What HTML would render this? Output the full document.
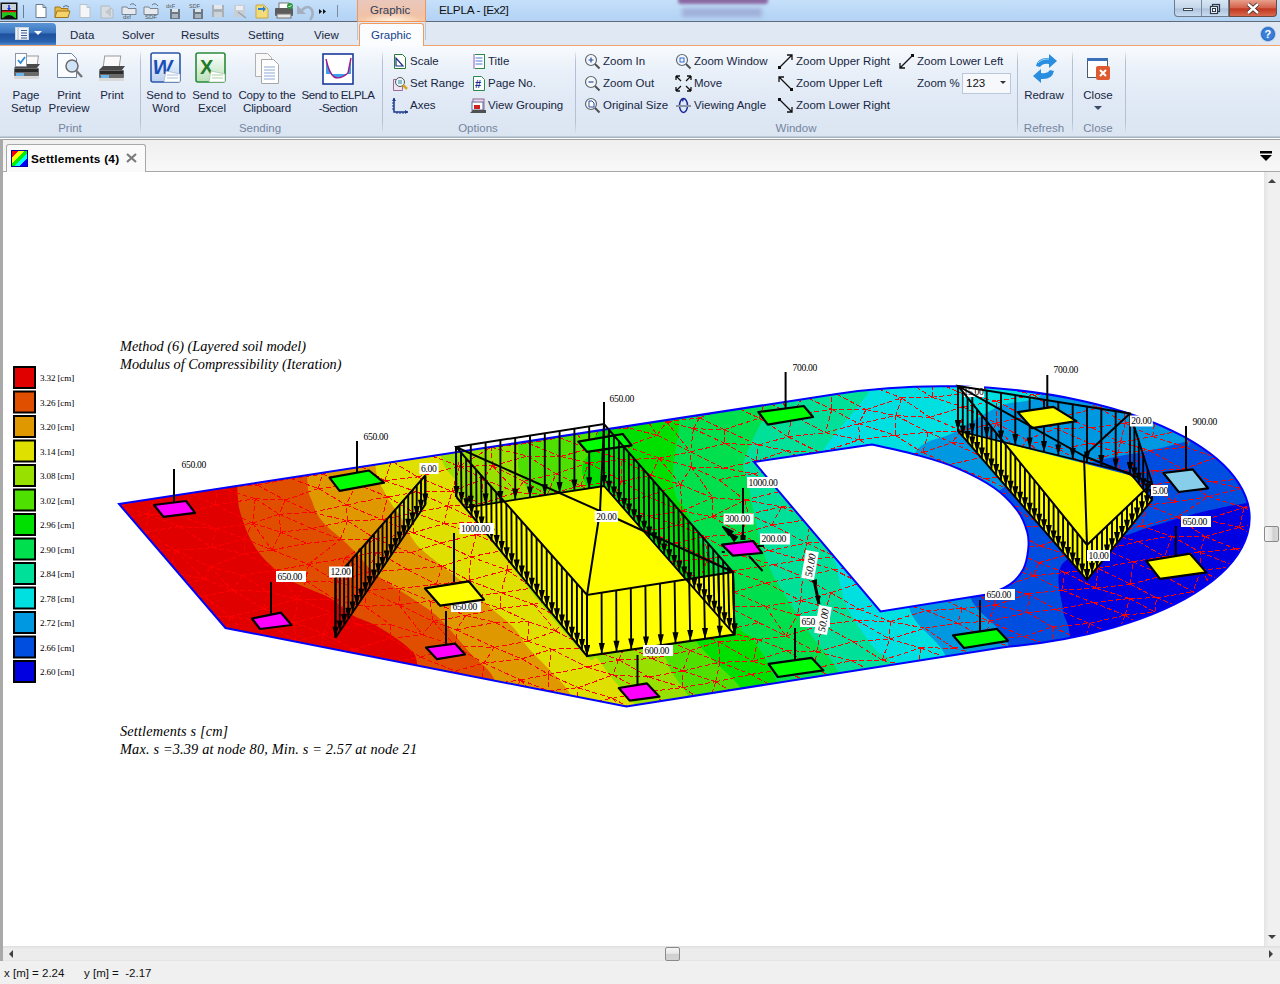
<!DOCTYPE html>
<html><head><meta charset="utf-8">
<style>
*{margin:0;padding:0;box-sizing:border-box}
html,body{width:1280px;height:984px;overflow:hidden;background:#fff;font-family:"Liberation Sans",sans-serif;font-size:11.5px;color:#172642}
.a{position:absolute}
.t{white-space:nowrap;line-height:14px}
.gl{color:#7485a0;text-align:center;white-space:nowrap;font-size:11.5px;line-height:14px}
.bt{text-align:center;white-space:nowrap;line-height:13px;color:#172642;font-size:11.5px}
svg{overflow:visible}
</style></head><body>
<svg class="a" style="left:0;top:0" width="1280" height="984" viewBox="0 0 1280 984">
<defs><clipPath id="pl"><path clip-rule="evenodd" d="M119 504L836.6 394A308.6 131.9 0 1 1 1002.2 647.4L626.5 706.5L225.5 628Z M754 462L871.9 444.5C879.4 446.2 903.0 451.1 917.0 455.0C931.0 458.9 942.9 462.1 955.8 467.6C968.7 473.1 984.1 480.8 994.4 488.0C1004.7 495.2 1012.1 503.6 1017.6 511.0C1023.1 518.4 1025.5 525.8 1027.3 532.3C1029.1 538.8 1028.9 543.6 1028.2 549.7C1027.5 555.8 1026.4 563.2 1023.4 569.0C1020.4 574.8 1015.6 580.2 1010.0 584.4C1004.4 588.6 993.3 592.4 990.0 594.0L880.5 611.5Z"/></clipPath></defs>
<g clip-path="url(#pl)">
<rect x="100" y="350" width="1170" height="380" fill="#0000e0"/>
<path d="M1270.0 360.0C1270.0 383.8 1273.7 479.2 1270.0 503.0C1266.3 526.8 1259.4 501.4 1247.6 503.0C1235.8 504.6 1215.3 508.7 1199.0 512.7C1182.7 516.7 1161.5 523.5 1150.0 527.0C1138.5 530.5 1138.3 531.0 1130.0 534.0C1121.7 537.0 1111.5 539.7 1100.0 545.0C1088.5 550.3 1067.2 555.2 1061.0 566.0C1054.8 576.8 1061.5 598.2 1063.0 610.0C1064.5 621.8 1068.5 618.7 1070.0 637.0C1071.5 655.3 1071.7 706.2 1072.0 720.0 L-10 720 L-10 360 Z" fill="#004ee0"/>
<path d="M1200.0 360.0C1198.3 373.5 1192.7 427.3 1190.0 441.0C1187.3 454.7 1190.7 440.4 1184.0 442.0C1177.3 443.6 1164.0 447.5 1150.0 450.5C1136.0 453.5 1116.7 455.9 1100.0 460.0C1083.3 464.1 1066.7 470.0 1050.0 475.0C1033.3 480.0 1015.0 479.2 1000.0 490.0C985.0 500.8 964.8 521.8 960.0 540.0C955.2 558.2 963.0 581.7 971.0 599.0C979.0 616.3 1000.7 623.8 1008.0 644.0C1015.3 664.2 1013.8 707.3 1015.0 720.0 L-10 720 L-10 360 Z" fill="#0098e0"/>
<path d="M1060.0 360.0C1056.7 366.0 1050.0 388.3 1040.0 396.0C1030.0 403.7 1014.2 400.0 1000.0 406.0C985.8 412.0 969.2 424.2 955.0 432.0C940.8 439.8 924.2 438.3 915.0 453.0C905.8 467.7 901.0 494.2 900.0 520.0C899.0 545.8 901.3 585.2 909.0 608.0C916.7 630.8 939.2 638.3 946.0 657.0C952.8 675.7 949.3 709.5 950.0 720.0 L-10 720 L-10 360 Z" fill="#00e0e0"/>
<path d="M875.0 360.0C874.3 364.8 879.5 373.8 870.7 389.0C862.0 404.2 834.3 432.5 822.5 451.0C810.7 469.5 798.4 482.5 800.0 500.0C801.6 517.5 825.7 543.8 832.0 556.0C838.3 568.2 835.4 565.2 837.6 573.0C839.8 580.8 841.4 593.3 845.0 602.5C848.6 611.7 854.3 620.1 859.5 628.0C864.7 635.9 870.5 643.8 876.0 650.0C881.5 656.2 888.5 653.3 892.5 665.0C896.5 676.7 898.8 710.8 900.0 720.0 L-10 720 L-10 360 Z" fill="#00e098"/>
<path d="M785.0 360.0C783.8 366.8 782.0 390.5 778.0 401.0C774.0 411.5 766.7 412.8 761.0 423.0C755.3 433.2 746.2 451.8 744.0 462.0C741.8 472.2 744.5 468.2 748.0 484.0C751.5 499.8 758.0 537.2 765.0 557.0C772.0 576.8 781.8 589.3 790.0 603.0C798.2 616.7 806.0 627.5 814.0 639.0C822.0 650.5 832.8 658.5 838.0 672.0C843.2 685.5 843.8 712.0 845.0 720.0 L-10 720 L-10 360 Z" fill="#00e04e"/>
<path d="M682.0 360.0C681.6 370.0 681.2 401.5 679.7 420.0C678.2 438.5 673.5 457.8 673.0 471.0C672.5 484.2 674.5 491.7 677.0 499.0C679.5 506.3 678.3 494.8 688.0 515.0C697.7 535.2 724.1 599.2 735.0 620.0C745.9 640.8 746.4 629.7 753.4 640.0C760.4 650.3 772.2 668.7 777.0 682.0C781.8 695.3 781.2 713.7 782.0 720.0 L-10 720 L-10 360 Z" fill="#00e000"/>
<path d="M600.0 360.0C599.7 370.7 599.7 409.0 598.0 424.0C596.3 439.0 592.2 440.3 590.0 450.0C587.8 459.7 576.7 463.7 585.0 482.0C593.3 500.3 621.4 533.3 640.0 560.0C658.6 586.7 679.7 620.5 696.6 642.0C713.5 663.5 732.9 676.0 741.5 689.0C750.1 702.0 746.9 714.8 748.0 720.0 L-10 720 L-10 360 Z" fill="#4ee000"/>
<path d="M516.0 360.0C516.3 374.0 516.2 422.7 518.0 444.0C519.8 465.3 513.3 465.3 527.0 488.0C540.7 510.7 578.0 553.2 600.0 580.0C622.0 606.8 647.0 633.6 659.0 649.0C671.0 664.4 667.0 664.4 672.0 672.5C677.0 680.6 685.3 689.6 689.0 697.5C692.7 705.4 693.2 716.2 694.0 720.0 L-10 720 L-10 360 Z" fill="#98e000"/>
<path d="M436.0 360.0C436.7 375.3 436.7 431.8 440.0 452.0C443.3 472.2 452.3 473.4 456.0 481.0C459.7 488.6 449.7 479.3 462.0 497.5C474.3 515.7 509.5 563.8 530.0 590.0C550.5 616.2 573.8 643.6 585.0 655.0C596.2 666.4 592.4 654.4 597.0 658.4C601.6 662.4 606.0 670.8 612.5 678.8C619.0 686.7 631.1 699.1 636.0 706.0C640.9 712.9 641.0 717.7 642.0 720.0 L-10 720 L-10 360 Z" fill="#e0e000"/>
<path d="M372.0 360.0C372.5 377.0 372.8 439.8 375.0 462.0C377.2 484.2 380.5 483.5 385.0 493.0C389.5 502.5 397.8 512.0 402.0 519.0C406.2 526.0 407.0 530.2 410.0 535.0C413.0 539.8 414.7 542.8 420.0 548.0C425.3 553.2 435.3 560.7 442.0 566.0C448.7 571.3 452.7 573.7 460.0 580.0C467.3 586.3 477.2 596.2 486.0 604.0C494.8 611.8 506.0 619.8 513.0 627.0C520.0 634.2 521.5 639.9 528.0 647.5C534.5 655.1 545.0 664.8 552.0 672.5C559.0 680.2 566.2 686.1 570.0 694.0C573.8 701.9 574.2 715.7 575.0 720.0 L-10 720 L-10 360 Z" fill="#e09800"/>
<path d="M305.0 360.0C305.3 379.2 305.8 451.5 307.0 475.0C308.2 498.5 309.5 493.3 312.0 501.0C314.5 508.7 316.5 514.2 322.0 521.0C327.5 527.8 339.2 536.5 345.0 542.0C350.8 547.5 351.5 548.3 357.0 554.0C362.5 559.7 368.7 568.5 378.0 576.0C387.3 583.5 402.8 592.0 413.0 599.0C423.2 606.0 429.3 608.8 439.0 618.0C448.7 627.2 461.8 643.8 471.0 654.0C480.2 664.2 489.5 668.0 494.0 679.0C498.5 690.0 497.3 713.2 498.0 720.0 L-10 720 L-10 360 Z" fill="#e04e00"/>
<path d="M235.0 360.0C235.3 380.5 235.7 456.2 237.0 483.0C238.3 509.8 239.2 509.2 243.0 521.0C246.8 532.8 252.2 544.2 260.0 554.0C267.8 563.8 278.3 572.7 290.0 580.0C301.7 587.3 319.7 592.2 330.0 598.0C340.3 603.8 344.2 610.3 352.0 615.0C359.8 619.7 367.7 620.6 377.0 626.0C386.3 631.4 401.2 641.0 408.0 647.5C414.8 654.0 415.5 652.9 417.5 665.0C419.5 677.1 419.6 710.8 420.0 720.0 L-10 720 L-10 360 Z" fill="#e00000"/>
<path d="M130.0 516.8L148.7 514.1M141.3 529.9L145.3 531.8M143.2 532.2L145.3 531.8M145.4 534.7L145.3 531.8M158.7 550.2L175.2 550.3M187.0 583.1L204.7 579.2M196.7 594.5L204.0 596.2M199.4 597.6L204.0 596.2M216.0 617.0L230.1 616.7M119.1 504.0L119.1 504.1M122.1 507.6L148.7 514.1M120.9 506.3L138.0 501.1M148.7 514.1L145.3 531.8M148.7 514.1L153.9 498.6M148.7 514.1L179.9 515.9M148.7 514.1L179.2 526.5M145.3 531.8L175.2 550.3M145.3 531.8L179.2 526.5M175.2 550.3L171.5 565.1M175.2 550.3L204.7 579.2M175.2 550.3L212.1 547.7M175.2 550.3L210.1 566.8M179.1 574.0L204.7 579.2M204.7 579.2L210.1 566.8M204.7 579.2L232.6 590.3M204.0 596.2L230.1 616.7M204.0 596.2L232.6 590.3M230.1 616.7L227.3 628.3M230.1 616.7L243.3 631.5M230.1 616.7L263.6 608.7M230.1 616.7L266.1 621.6M260.0 634.7L266.1 621.6M295.7 641.7L295.9 641.7M189.7 493.2L191.2 493.8M157.5 498.1L179.9 515.9M181.5 494.4L191.2 493.8M179.9 515.9L191.2 493.8M179.9 515.9L215.1 505.0M179.9 515.9L215.5 528.5M179.2 526.5L212.1 547.7M179.2 526.5L215.5 528.5M212.1 547.7L215.5 528.5M212.1 547.7L244.6 538.5M212.1 547.7L244.5 553.6M210.1 566.8L242.3 575.3M210.1 566.8L232.6 590.3M210.1 566.8L244.5 553.6M242.3 575.3L232.6 590.3M242.3 575.3L276.4 570.1M242.3 575.3L267.5 591.5M232.6 590.3L263.6 608.7M232.6 590.3L267.5 591.5M263.6 608.7L267.5 591.5M263.6 608.7L297.5 599.1M263.6 608.7L294.2 622.4M266.1 621.6L295.9 641.7M266.1 621.6L294.2 622.4M295.9 641.7L294.2 622.4M295.9 641.7L323.4 633.6M295.9 641.7L296.1 641.8M191.2 493.8L215.1 505.0M191.2 493.8L201.6 491.3M215.1 505.0L217.6 488.9M215.1 505.0L255.2 498.7M215.1 505.0L252.7 523.2M215.5 528.5L244.6 538.5M215.5 528.5L252.7 523.2M244.6 538.5L244.5 553.6M244.6 538.5L252.7 523.2M244.6 538.5L272.0 550.0M244.5 553.6L276.4 570.1M244.5 553.6L272.0 550.0M276.4 570.1L297.5 599.1M276.4 570.1L308.5 564.4M276.4 570.1L305.8 581.1M267.5 591.5L297.5 599.1M297.5 599.1L294.2 622.4M297.5 599.1L305.8 581.1M297.5 599.1L336.6 600.2M297.5 599.1L332.4 612.9M294.2 622.4L323.4 633.6M294.2 622.4L332.4 612.9M323.4 633.6L322.0 646.9M323.4 633.6L332.4 612.9M323.4 633.6L358.5 624.9M323.4 633.6L353.7 649.5M342.0 650.8L353.7 649.5M353.2 653.0L353.7 649.5M253.2 483.4L257.4 485.2M221.0 488.4L255.2 498.7M232.4 486.6L257.4 485.2M255.2 498.7L252.7 523.2M255.2 498.7L285.1 500.0M255.2 498.7L279.2 514.2M252.7 523.2L280.7 532.2M252.7 523.2L272.0 550.0M252.7 523.2L279.2 514.2M280.7 532.2L272.0 550.0M280.7 532.2L279.2 514.2M280.7 532.2L311.8 528.5M280.7 532.2L306.9 543.4M272.0 550.0L308.5 564.4M272.0 550.0L306.9 543.4M308.5 564.4L305.8 581.1M308.5 564.4L344.7 558.1M308.5 564.4L337.0 582.2M308.5 564.4L340.3 539.4M305.8 581.1L336.6 600.2M305.8 581.1L337.0 582.2M336.6 600.2L358.5 624.9M336.6 600.2L337.0 582.2M336.6 600.2L365.9 590.5M336.6 600.2L364.9 606.4M332.4 612.9L358.5 624.9M358.5 624.9L390.7 624.7M358.5 624.9L390.5 638.3M353.7 649.5L372.1 656.7M353.7 649.5L390.5 638.3M396.6 661.5L420.5 657.1M289.2 477.9L290.9 478.5M257.4 485.2L285.1 500.0M257.4 485.2L290.9 478.5M285.1 500.0L279.2 514.2M285.1 500.0L318.3 488.6M285.1 500.0L312.4 512.4M279.2 514.2L311.8 528.5M279.2 514.2L312.4 512.4M311.8 528.5L347.6 520.9M311.8 528.5L340.3 539.4M306.9 543.4L340.3 539.4M344.7 558.1L337.0 582.2M344.7 558.1L376.7 552.0M344.7 558.1L367.0 572.1M344.7 558.1L375.5 538.9M337.0 582.2L365.9 590.5M337.0 582.2L367.0 572.1M365.9 590.5L364.9 606.4M365.9 590.5L400.2 588.2M365.9 590.5L398.9 604.7M364.9 606.4L390.7 624.7M364.9 606.4L398.9 604.7M390.7 624.7L390.5 638.3M390.7 624.7L422.4 634.6M390.5 638.3L420.5 657.1M390.5 638.3L422.4 634.6M420.5 657.1L455.7 646.3M420.5 657.1L455.4 671.1M448.5 671.7L455.4 671.1M320.1 473.2L322.5 474.2M290.9 478.5L318.3 488.6M290.9 478.5L322.5 474.2M318.3 488.6L322.5 474.2M318.3 488.6L356.4 484.0M318.3 488.6L346.2 504.9M312.4 512.4L347.6 520.9M312.4 512.4L346.2 504.9M347.6 520.9L340.3 539.4M347.6 520.9L346.2 504.9M347.6 520.9L381.8 519.6M347.6 520.9L375.5 538.9M340.3 539.4L375.5 538.9M376.7 552.0L367.0 572.1M376.7 552.0L410.8 552.6M376.7 552.0L407.3 569.4M367.0 572.1L400.2 588.2M367.0 572.1L407.3 569.4M400.2 588.2L398.9 604.7M400.2 588.2L436.2 584.4M400.2 588.2L429.9 601.2M398.9 604.7L433.3 621.4M398.9 604.7L422.4 634.6M398.9 604.7L429.9 601.2M433.3 621.4L422.4 634.6M433.3 621.4L455.7 646.3M433.3 621.4L429.9 601.2M433.3 621.4L465.7 615.5M433.3 621.4L456.4 629.9M422.4 634.6L455.7 646.3M455.7 646.3L456.4 629.9M455.7 646.3L494.3 647.3M455.7 646.3L483.9 663.2M455.4 671.1L460.8 674.1M455.4 671.1L483.9 663.2M482.5 678.3L483.9 663.2M503.5 682.4L520.5 679.9M322.5 474.2L356.4 484.0M322.5 474.2L330.6 471.6M356.4 484.0L346.2 504.9M356.4 484.0L384.7 480.8M356.4 484.0L387.7 496.8M346.2 504.9L381.8 519.6M346.2 504.9L387.7 496.8M381.8 519.6L387.7 496.8M381.8 519.6L414.1 512.8M381.8 519.6L413.0 532.8M375.5 538.9L410.8 552.6M375.5 538.9L413.0 532.8M410.8 552.6L440.8 542.9M410.8 552.6L442.4 566.3M407.3 569.4L436.2 584.4M407.3 569.4L442.4 566.3M436.2 584.4L442.4 566.3M436.2 584.4L469.0 580.4M436.2 584.4L463.4 597.4M429.9 601.2L465.7 615.5M429.9 601.2L463.4 597.4M465.7 615.5L456.4 629.9M465.7 615.5L500.7 608.3M465.7 615.5L495.4 622.3M456.4 629.9L494.3 647.3M456.4 629.9L495.4 622.3M494.3 647.3L483.9 663.2M494.3 647.3L527.5 641.2M494.3 647.3L521.8 658.9M483.9 663.2L520.5 679.9M483.9 663.2L521.8 658.9M520.5 679.9L517.8 685.2M520.5 679.9L526.9 687.0M520.5 679.9L548.7 674.5M520.5 679.9L548.7 690.9M548.5 691.2L548.7 690.9M362.0 466.7L384.7 480.8M384.7 480.8L390.8 462.3M384.7 480.8L417.4 476.9M384.7 480.8L417.4 492.1M387.7 496.8L414.1 512.8M387.7 496.8L417.4 492.1M414.1 512.8L413.0 532.8M414.1 512.8L447.8 506.2M414.1 512.8L444.2 523.6M413.0 532.8L440.8 542.9M413.0 532.8L444.2 523.6M440.8 542.9L476.0 534.7M440.8 542.9L470.6 556.8M442.4 566.3L469.0 580.4M442.4 566.3L470.6 556.8M469.0 580.4L470.6 556.8M469.0 580.4L507.2 570.0M469.0 580.4L500.9 592.7M463.4 597.4L500.7 608.3M463.4 597.4L500.9 592.7M500.7 608.3L500.9 592.7M500.7 608.3L533.8 604.4M500.7 608.3L528.8 621.9M495.4 622.3L527.5 641.2M495.4 622.3L528.8 621.9M527.5 641.2L528.8 621.9M527.5 641.2L555.6 631.0M527.5 641.2L551.1 649.2M521.8 658.9L548.7 674.5M521.8 658.9L551.1 649.2M548.7 674.5L548.7 690.9M548.7 674.5L551.1 649.2M548.7 674.5L586.8 667.1M548.7 674.5L578.2 687.7M548.7 690.9L549.8 691.5M548.7 690.9L578.2 687.7M577.1 696.8L578.2 687.7M597.5 700.8L612.5 698.3M393.1 462.0L417.4 476.9M417.4 476.9L459.5 466.2M417.4 476.9L452.1 491.4M417.4 492.1L447.8 506.2M417.4 492.1L452.1 491.4M447.8 506.2L444.2 523.6M447.8 506.2L452.1 491.4M447.8 506.2L481.0 503.7M447.8 506.2L481.0 522.0M444.2 523.6L476.0 534.7M444.2 523.6L481.0 522.0M476.0 534.7L470.6 556.8M476.0 534.7L481.0 522.0M476.0 534.7L507.2 535.4M476.0 534.7L510.1 548.9M470.6 556.8L507.2 570.0M470.6 556.8L510.1 548.9M507.2 570.0L500.9 592.7M507.2 570.0L510.1 548.9M507.2 570.0L541.8 569.4M507.2 570.0L532.7 588.0M500.9 592.7L533.8 604.4M500.9 592.7L532.7 588.0M533.8 604.4L555.6 631.0M533.8 604.4L569.0 593.7M533.8 604.4L563.9 619.9M528.8 621.9L555.6 631.0M555.6 631.0L563.9 619.9M555.6 631.0L588.2 648.2M551.1 649.2L586.8 667.1M551.1 649.2L588.2 648.2M586.8 667.1L618.6 659.8M586.8 667.1L612.8 675.0M578.2 687.7L612.5 698.3M578.2 687.7L612.8 675.0M612.5 698.3L618.0 704.8M612.5 698.3L645.3 692.0M612.5 698.3L627.5 706.3M431.8 456.0L459.5 466.2M459.5 466.2L452.1 491.4M459.5 466.2L455.0 452.5M459.5 466.2L492.6 465.8M459.5 466.2L483.2 479.2M459.5 466.2L491.0 447.4M452.1 491.4L481.0 503.7M452.1 491.4L483.2 479.2M481.0 503.7L483.2 479.2M481.0 503.7L516.6 492.4M481.0 503.7L516.7 515.1M481.0 522.0L507.2 535.4M481.0 522.0L516.7 515.1M507.2 535.4L516.7 515.1M507.2 535.4L542.7 530.7M507.2 535.4L538.5 546.9M510.1 548.9L541.8 569.4M510.1 548.9L538.5 546.9M541.8 569.4L532.7 588.0M541.8 569.4L569.0 593.7M541.8 569.4L571.8 556.5M541.8 569.4L571.1 580.4M532.7 588.0L569.0 593.7M569.0 593.7L563.9 619.9M569.0 593.7L571.1 580.4M569.0 593.7L596.3 591.3M569.0 593.7L594.0 614.4M563.9 619.9L595.3 625.7M563.9 619.9L588.2 648.2M563.9 619.9L594.0 614.4M595.3 625.7L594.0 614.4M595.3 625.7L627.9 627.8M595.3 625.7L625.5 644.9M588.2 648.2L618.6 659.8M588.2 648.2L625.5 644.9M618.6 659.8L612.8 675.0M618.6 659.8L625.5 644.9M618.6 659.8L652.0 658.7M618.6 659.8L648.9 677.1M612.8 675.0L645.3 692.0M612.8 675.0L648.9 677.1M645.3 692.0L683.0 687.5M645.3 692.0L662.7 700.8M490.1 447.1L491.0 447.4M474.2 449.5L491.0 447.4M492.6 465.8L483.2 479.2M492.6 465.8L516.6 492.4M492.6 465.8L491.0 447.4M492.6 465.8L527.5 456.1M492.6 465.8L523.3 481.3M483.2 479.2L516.6 492.4M516.6 492.4L523.3 481.3M516.6 492.4L547.3 494.8M516.7 515.1L542.7 530.7M516.7 515.1L547.3 494.8M516.7 515.1L548.5 512.8M542.7 530.7L571.8 556.5M542.7 530.7L548.5 512.8M542.7 530.7L579.9 524.6M542.7 530.7L578.4 543.9M538.5 546.9L571.8 556.5M571.8 556.5L571.1 580.4M571.8 556.5L578.4 543.9M571.8 556.5L604.9 553.8M571.8 556.5L606.6 571.2M571.1 580.4L596.3 591.3M571.1 580.4L606.6 571.2M596.3 591.3L606.6 571.2M596.3 591.3L631.9 583.5M596.3 591.3L628.3 606.0M594.0 614.4L627.9 627.8M594.0 614.4L628.3 606.0M627.9 627.8L657.6 617.8M627.9 627.8L658.0 636.0M625.5 644.9L652.0 658.7M625.5 644.9L658.0 636.0M652.0 658.7L658.0 636.0M652.0 658.7L690.0 650.5M652.0 658.7L682.8 670.9M648.9 677.1L683.0 687.5M648.9 677.1L682.8 670.9M683.0 687.5L682.8 670.9M683.0 687.5L715.6 681.7M683.0 687.5L695.0 695.7M491.1 446.9L491.0 447.4M525.7 441.6L528.3 443.3M491.0 447.4L527.5 456.1M491.0 447.4L528.3 443.3M527.5 456.1L560.8 456.5M527.5 456.1L556.0 473.7M523.3 481.3L547.3 494.8M523.3 481.3L556.0 473.7M547.3 494.8L548.5 512.8M547.3 494.8L556.0 473.7M547.3 494.8L580.6 485.8M547.3 494.8L583.6 502.7M548.5 512.8L579.9 524.6M548.5 512.8L583.6 502.7M579.9 524.6L610.1 516.9M579.9 524.6L609.4 531.9M578.4 543.9L604.9 553.8M578.4 543.9L609.4 531.9M604.9 553.8L606.6 571.2M604.9 553.8L609.4 531.9M604.9 553.8L642.0 551.4M604.9 553.8L633.9 565.8M606.6 571.2L631.9 583.5M606.6 571.2L633.9 565.8M631.9 583.5L664.1 580.6M631.9 583.5L667.8 599.0M628.3 606.0L657.6 617.8M628.3 606.0L667.8 599.0M657.6 617.8L658.0 636.0M657.6 617.8L667.8 599.0M657.6 617.8L688.7 631.8M658.0 636.0L690.0 650.5M658.0 636.0L688.7 631.8M690.0 650.5L682.8 670.9M690.0 650.5L718.6 641.6M690.0 650.5L719.9 662.2M682.8 670.9L715.6 681.7M682.8 670.9L719.9 662.2M715.6 681.7L712.2 693.0M715.6 681.7L719.9 662.2M715.6 681.7L750.9 674.4M715.6 681.7L729.6 690.3M528.3 441.2L528.3 443.3M557.4 436.8L559.1 437.7M528.3 443.3L560.8 456.5M528.3 443.3L559.1 437.7M560.8 456.5L588.5 448.6M560.8 456.5L588.6 462.9M556.0 473.7L580.6 485.8M556.0 473.7L588.6 462.9M580.6 485.8L588.6 462.9M580.6 485.8L621.7 481.1M580.6 485.8L611.9 502.3M583.6 502.7L610.1 516.9M583.6 502.7L611.9 502.3M610.1 516.9L609.4 531.9M610.1 516.9L648.2 516.2M610.1 516.9L644.7 531.0M609.4 531.9L642.0 551.4M609.4 531.9L644.7 531.0M642.0 551.4L633.9 565.8M642.0 551.4L644.7 531.0M642.0 551.4L676.3 543.0M642.0 551.4L669.8 561.5M633.9 565.8L664.1 580.6M633.9 565.8L669.8 561.5M664.1 580.6L669.8 561.5M664.1 580.6L699.5 580.1M664.1 580.6L697.8 594.7M667.8 599.0L698.2 610.4M667.8 599.0L688.7 631.8M667.8 599.0L697.8 594.7M698.2 610.4L727.3 606.4M698.2 610.4L722.6 630.5M688.7 631.8L718.6 641.6M688.7 631.8L722.6 630.5M718.6 641.6L719.9 662.2M718.6 641.6L757.8 639.6M718.6 641.6L753.3 661.4M719.9 662.2L750.9 674.4M719.9 662.2L753.3 661.4M750.9 674.4L781.9 669.7M750.9 674.4L768.9 684.1M576.9 433.8L588.5 448.6M559.1 437.7L588.5 448.6M588.5 448.6L598.4 430.5M588.5 448.6L625.6 446.2M588.5 448.6L621.4 459.7M588.6 462.9L621.7 481.1M588.6 462.9L621.4 459.7M621.7 481.1L611.9 502.3M621.7 481.1L621.4 459.7M621.7 481.1L651.0 475.2M621.7 481.1L647.3 496.3M611.9 502.3L648.2 516.2M611.9 502.3L647.3 496.3M648.2 516.2L681.9 511.1M648.2 516.2L679.2 525.3M644.7 531.0L676.3 543.0M644.7 531.0L679.2 525.3M676.3 543.0L704.8 536.6M676.3 543.0L707.8 558.8M669.8 561.5L699.5 580.1M669.8 561.5L707.8 558.8M699.5 580.1L707.8 558.8M699.5 580.1L731.5 570.8M699.5 580.1L734.1 592.1M697.8 594.7L727.3 606.4M697.8 594.7L734.1 592.1M727.3 606.4L734.1 592.1M727.3 606.4L765.4 606.4M727.3 606.4L758.9 622.7M722.6 630.5L757.8 639.6M722.6 630.5L758.9 622.7M757.8 639.6L753.3 661.4M757.8 639.6L785.9 636.0M757.8 639.6L786.5 650.5M753.3 661.4L781.9 669.7M753.3 661.4L786.5 650.5M781.9 669.7L814.8 668.2M781.9 669.7L801.6 678.9M625.2 426.4L629.6 428.2M600.4 430.2L625.6 446.2M608.2 429.0L629.6 428.2M625.6 446.2L657.1 435.2M625.6 446.2L659.0 458.2M621.4 459.7L651.0 475.2M621.4 459.7L659.0 458.2M651.0 475.2L659.0 458.2M651.0 475.2L680.5 484.6M647.3 496.3L681.9 511.1M647.3 496.3L680.5 484.6M681.9 511.1L679.2 525.3M681.9 511.1L680.5 484.6M681.9 511.1L712.8 497.8M681.9 511.1L712.1 516.7M679.2 525.3L704.8 536.6M679.2 525.3L712.1 516.7M704.8 536.6L707.8 558.8M704.8 536.6L741.3 533.9M704.8 536.6L734.6 554.0M707.8 558.8L731.5 570.8M707.8 558.8L734.6 554.0M731.5 570.8L773.5 564.6M731.5 570.8L765.9 583.0M734.1 592.1L765.4 606.4M734.1 592.1L765.9 583.0M765.4 606.4L785.9 636.0M765.4 606.4L800.7 600.6M765.4 606.4L797.3 614.9M758.9 622.7L785.9 636.0M785.9 636.0L797.3 614.9M785.9 636.0L822.1 624.9M785.9 636.0L816.6 651.9M786.5 650.5L814.8 668.2M786.5 650.5L816.6 651.9M814.8 668.2L816.6 651.9M814.8 668.2L851.8 660.6M814.8 668.2L827.7 674.8M648.9 422.7L657.1 435.2M664.3 420.4L666.6 421.8M629.6 428.2L657.1 435.2M657.1 435.2L666.6 421.8M657.1 435.2L690.5 451.9M659.0 458.2L691.3 467.0M659.0 458.2L680.5 484.6M659.0 458.2L690.5 451.9M691.3 467.0L680.5 484.6M691.3 467.0L712.8 497.8M691.3 467.0L690.5 451.9M691.3 467.0L723.1 468.1M691.3 467.0L718.8 479.6M680.5 484.6L712.8 497.8M712.8 497.8L712.1 516.7M712.8 497.8L744.7 500.0M712.1 516.7L741.3 533.9M712.1 516.7L744.7 500.0M712.1 516.7L748.5 514.3M741.3 533.9L748.5 514.3M741.3 533.9L771.8 524.9M741.3 533.9L768.9 550.7M734.6 554.0L773.5 564.6M734.6 554.0L768.9 550.7M773.5 564.6L802.2 560.0M773.5 564.6L802.6 576.6M765.9 583.0L800.7 600.6M765.9 583.0L802.6 576.6M800.7 600.6L797.3 614.9M800.7 600.6L802.6 576.6M800.7 600.6L830.7 592.8M800.7 600.6L826.3 607.3M797.3 614.9L822.1 624.9M797.3 614.9L826.3 607.3M822.1 624.9L816.6 651.9M822.1 624.9L857.0 620.5M822.1 624.9L852.8 641.6M816.6 651.9L851.8 660.6M816.6 651.9L852.8 641.6M851.8 660.6L882.3 660.3M851.8 660.6L866.4 668.7M667.0 420.0L666.6 421.8M695.1 415.6L699.5 417.9M666.6 421.8L693.4 428.7M666.6 421.8L690.5 451.9M666.6 421.8L699.5 417.9M693.4 428.7L690.5 451.9M693.4 428.7L699.5 417.9M693.4 428.7L724.2 429.7M693.4 428.7L725.0 443.5M690.5 451.9L723.1 468.1M690.5 451.9L725.0 443.5M723.1 468.1L756.2 461.2M723.1 468.1L753.1 473.6M718.8 479.6L744.7 500.0M718.8 479.6L753.1 473.6M744.7 500.0L748.5 514.3M744.7 500.0L779.1 491.7M744.7 500.0L781.7 506.8M748.5 514.3L771.8 524.9M748.5 514.3L781.7 506.8M771.8 524.9L781.7 506.8M771.8 524.9L803.3 520.3M771.8 524.9L806.9 543.1M768.9 550.7L802.2 560.0M768.9 550.7L806.9 543.1M802.2 560.0L806.9 543.1M802.2 560.0L834.5 557.1M802.2 560.0L833.5 569.6M802.6 576.6L830.7 592.8M802.6 576.6L833.5 569.6M830.7 592.8L826.3 607.3M830.7 592.8L857.1 583.9M830.7 592.8L859.6 609.3M826.3 607.3L857.0 620.5M826.3 607.3L859.6 609.3M857.0 620.5L890.2 621.5M857.0 620.5L889.7 639.1M852.8 641.6L882.3 660.3M852.8 641.6L889.7 639.1M882.3 660.3L889.7 639.1M882.3 660.3L920.5 647.9M882.3 660.3L898.1 663.8M699.5 417.9L724.2 429.7M699.5 417.9L712.2 413.0M724.2 429.7L725.0 443.5M724.2 429.7L759.1 418.2M724.2 429.7L758.5 445.0M725.0 443.5L756.2 461.2M725.0 443.5L758.5 445.0M756.2 461.2L758.5 445.0M756.2 461.2L786.4 450.8M756.2 461.2L757.3 461.5M753.1 473.6L771.6 482.8M753.1 473.6L762.6 472.1M781.7 506.8L797.7 513.7M781.7 506.8L792.3 507.3M809.3 527.4L806.9 543.1M806.9 543.1L833.3 555.7M806.9 543.1L821.6 541.9M833.5 569.6L853.4 579.4M833.5 569.6L843.8 568.1M859.6 609.3L890.2 621.5M859.6 609.3L874.8 604.8M890.2 621.5L889.7 639.1M890.2 621.5L926.3 610.7M890.2 621.5L924.8 628.2M889.7 639.1L920.5 647.9M889.7 639.1L924.8 628.2M920.5 647.9L919.6 660.4M920.5 647.9L953.7 648.1M920.5 647.9L943.5 656.6M739.6 408.8L759.1 418.2M759.1 418.2L763.7 405.1M759.1 418.2L792.1 414.9M759.1 418.2L788.1 436.8M758.5 445.0L786.4 450.8M758.5 445.0L788.1 436.8M786.4 450.8L817.3 452.6M786.4 450.8L796.2 455.7M912.5 606.4L926.3 610.7M926.3 610.7L962.3 608.4M926.3 610.7L957.8 623.2M924.8 628.2L953.7 648.1M924.8 628.2L957.8 623.2M953.7 648.1L986.6 639.2M953.7 648.1L969.9 652.4M782.4 402.3L792.1 414.9M770.8 404.0L792.1 414.9M792.1 414.9L788.1 436.8M792.1 414.9L801.2 399.4M792.1 414.9L831.9 409.3M792.1 414.9L825.4 432.7M788.1 436.8L819.2 452.3M788.1 436.8L825.4 432.7M823.4 451.7L859.4 439.7M946.5 600.9L962.3 608.4M962.3 608.4L957.8 623.2M962.3 608.4L994.9 605.3M962.3 608.4L988.8 621.2M957.8 623.2L986.6 639.2M957.8 623.2L988.8 621.2M986.6 639.2L988.8 621.2M986.6 639.2L1024.3 636.6M986.6 639.2L1010.4 646.6M808.4 398.3L831.9 409.3M831.9 409.3L825.4 432.7M831.9 409.3L831.5 394.7M831.9 409.3L866.0 409.6M831.9 409.3L858.8 423.7M825.4 432.7L859.4 439.7M825.4 432.7L858.8 423.7M859.4 439.7L858.8 423.7M859.4 439.7L895.2 435.4M859.4 439.7L867.8 445.1M979.8 595.6L994.9 605.3M994.9 605.3L988.8 621.2M994.9 605.3L998.3 590.5M994.9 605.3L1028.2 593.9M994.9 605.3L1027.9 612.6M988.8 621.2L1024.3 636.6M988.8 621.2L1027.9 612.6M1024.3 636.6L1052.4 626.9M1024.3 636.6L1042.0 642.7M836.4 394.0L866.0 409.6M866.0 409.6L858.8 423.7M866.0 409.6L901.5 398.0M866.0 409.6L895.9 415.6M858.8 423.7L895.2 435.4M858.8 423.7L895.9 415.6M895.2 435.4L895.9 415.6M895.2 435.4L928.3 432.2M895.2 435.4L922.8 452.6M913.3 454.0L922.8 452.6M948.5 464.7L949.7 464.6M1021.5 572.2L1034.0 575.9M1002.1 588.8L1028.2 593.9M1010.2 584.2L1034.0 575.9M1028.2 593.9L1027.9 612.6M1028.2 593.9L1061.9 590.1M1028.2 593.9L1056.0 609.4M1027.9 612.6L1052.4 626.9M1027.9 612.6L1056.0 609.4M1052.4 626.9L1054.3 640.7M1052.4 626.9L1089.7 623.4M1052.4 626.9L1074.6 636.9M878.7 388.9L901.5 398.0M901.5 398.0L895.9 415.6M901.5 398.0L932.0 397.3M901.5 398.0L930.0 417.4M895.9 415.6L928.3 432.2M895.9 415.6L930.0 417.4M928.3 432.2L922.8 452.6M928.3 432.2L961.3 430.8M928.3 432.2L951.7 442.7M922.8 452.6L949.7 464.6M922.8 452.6L951.7 442.7M949.7 464.6L983.1 457.0M949.7 464.6L985.0 478.6M980.4 479.5L985.0 478.6M1001.4 493.4L1015.6 492.5M1025.6 526.6L1044.3 525.9M1028.6 540.0L1040.0 545.9M1027.1 557.5L1038.8 562.8M1024.5 566.6L1034.0 575.9M1028.5 546.5L1040.0 545.9M1038.8 562.8L1034.0 575.9M1038.8 562.8L1067.4 554.6M1038.8 562.8L1064.8 572.5M1034.0 575.9L1061.9 590.1M1034.0 575.9L1064.8 572.5M1061.9 590.1L1064.8 572.5M1061.9 590.1L1095.8 588.2M1061.9 590.1L1093.2 602.7M1056.0 609.4L1089.7 623.4M1056.0 609.4L1093.2 602.7M1089.7 623.4L1086.8 634.3M1089.7 623.4L1125.1 615.1M1089.7 623.4L1103.7 630.1M915.7 386.7L932.0 397.3M932.0 397.3L933.1 386.3M932.0 397.3L962.5 393.7M932.0 397.3L962.7 406.8M930.0 417.4L961.3 430.8M930.0 417.4L962.7 406.8M961.3 430.8L951.7 442.7M961.3 430.8L962.7 406.8M961.3 430.8L996.4 423.1M961.3 430.8L986.1 444.5M951.7 442.7L983.1 457.0M951.7 442.7L986.1 444.5M983.1 457.0L1018.3 455.1M983.1 457.0L1018.6 475.2M985.0 478.6L1015.6 492.5M985.0 478.6L1018.6 475.2M1015.6 492.5L1018.6 475.2M1015.6 492.5L1049.6 489.3M1015.6 492.5L1046.8 502.1M1017.6 511.0L1044.3 525.9M1014.3 506.8L1046.8 502.1M1044.3 525.9L1046.8 502.1M1044.3 525.9L1075.6 518.1M1044.3 525.9L1068.4 536.1M1040.0 545.9L1067.4 554.6M1040.0 545.9L1068.4 536.1M1067.4 554.6L1068.4 536.1M1067.4 554.6L1104.9 549.5M1067.4 554.6L1098.1 568.3M1064.8 572.5L1095.8 588.2M1064.8 572.5L1098.1 568.3M1095.8 588.2L1098.1 568.3M1095.8 588.2L1130.3 584.2M1095.8 588.2L1129.6 598.5M1093.2 602.7L1125.1 615.1M1093.2 602.7L1129.6 598.5M1125.1 615.1L1121.4 625.0M1125.1 615.1L1129.6 598.5M1125.1 615.1L1154.9 612.0M1125.1 615.1L1134.1 620.9M945.5 386.2L962.5 393.7M962.5 393.7L962.7 406.8M962.5 393.7L987.6 387.7M962.5 393.7L996.3 401.1M962.7 406.8L996.4 423.1M962.7 406.8L996.3 401.1M996.4 423.1L986.1 444.5M996.4 423.1L1018.3 455.1M996.4 423.1L996.3 401.1M996.4 423.1L1026.6 416.8M996.4 423.1L1026.5 439.7M986.1 444.5L1018.3 455.1M1018.3 455.1L1018.6 475.2M1018.3 455.1L1026.5 439.7M1018.3 455.1L1054.2 468.8M1018.6 475.2L1049.6 489.3M1018.6 475.2L1054.2 468.8M1049.6 489.3L1078.1 477.2M1049.6 489.3L1079.3 501.2M1046.8 502.1L1075.6 518.1M1046.8 502.1L1079.3 501.2M1075.6 518.1L1068.4 536.1M1075.6 518.1L1079.3 501.2M1075.6 518.1L1110.4 512.7M1075.6 518.1L1106.5 532.9M1068.4 536.1L1104.9 549.5M1068.4 536.1L1106.5 532.9M1104.9 549.5L1098.1 568.3M1104.9 549.5L1138.2 541.5M1104.9 549.5L1132.8 561.7M1098.1 568.3L1130.3 584.2M1098.1 568.3L1132.8 561.7M1130.3 584.2L1132.8 561.7M1130.3 584.2L1163.6 575.6M1130.3 584.2L1156.5 597.7M1129.6 598.5L1154.9 612.0M1129.6 598.5L1156.5 597.7M1154.9 612.0L1156.5 597.7M1154.9 612.0L1157.5 612.0M1154.9 612.0L1156.3 612.5M1015.0 390.1L1034.6 395.2M996.3 401.1L1026.6 416.8M996.3 401.1L1034.6 395.2M1026.6 416.8L1061.5 416.6M1026.6 416.8L1056.1 428.7M1026.5 439.7L1058.5 449.1M1026.5 439.7L1054.2 468.8M1026.5 439.7L1056.1 428.7M1058.5 449.1L1090.5 443.6M1058.5 449.1L1082.9 463.1M1054.2 468.8L1078.1 477.2M1054.2 468.8L1082.9 463.1M1078.1 477.2L1118.6 477.3M1078.1 477.2L1110.0 495.8M1079.3 501.2L1110.4 512.7M1079.3 501.2L1110.0 495.8M1110.4 512.7L1106.5 532.9M1110.4 512.7L1110.0 495.8M1110.4 512.7L1146.9 504.9M1110.4 512.7L1141.1 526.2M1106.5 532.9L1138.2 541.5M1106.5 532.9L1141.1 526.2M1138.2 541.5L1171.9 536.2M1138.2 541.5L1164.6 556.6M1132.8 561.7L1163.6 575.6M1132.8 561.7L1164.6 556.6M1163.6 575.6L1164.6 556.6M1163.6 575.6L1200.8 570.2M1163.6 575.6L1192.9 592.0M1156.5 597.7L1173.7 604.6M1156.5 597.7L1192.9 592.0M1034.6 395.2L1061.5 416.6M1034.6 395.2L1045.1 394.0M1061.5 416.6L1098.6 407.9M1061.5 416.6L1091.3 427.7M1056.1 428.7L1090.5 443.6M1056.1 428.7L1091.3 427.7M1090.5 443.6L1120.6 442.2M1090.5 443.6L1117.8 452.8M1082.9 463.1L1118.6 477.3M1082.9 463.1L1117.8 452.8M1118.6 477.3L1110.0 495.8M1118.6 477.3L1146.9 504.9M1118.6 477.3L1117.8 452.8M1118.6 477.3L1154.0 470.5M1118.6 477.3L1150.0 485.5M1118.6 477.3L1149.1 450.3M1110.0 495.8L1146.9 504.9M1146.9 504.9L1141.1 526.2M1146.9 504.9L1174.3 502.2M1146.9 504.9L1177.3 517.2M1141.1 526.2L1171.9 536.2M1141.1 526.2L1177.3 517.2M1171.9 536.2L1164.6 556.6M1171.9 536.2L1204.7 536.5M1171.9 536.2L1200.1 552.2M1164.6 556.6L1200.8 570.2M1164.6 556.6L1200.1 552.2M1200.8 570.2L1192.9 592.0M1200.8 570.2L1209.4 583.0M1200.8 570.2L1200.1 552.2M1200.8 570.2L1227.1 567.3M1200.8 570.2L1215.5 578.2M1192.9 592.0L1195.2 592.7M1086.8 401.9L1098.6 407.9M1098.6 407.9L1104.2 406.2M1098.6 407.9L1125.1 423.1M1091.3 427.7L1120.6 442.2M1091.3 427.7L1125.1 423.1M1120.6 442.2L1117.8 452.8M1120.6 442.2L1125.1 423.1M1120.6 442.2L1152.7 436.5M1120.6 442.2L1149.1 450.3M1117.8 452.8L1149.1 450.3M1154.0 470.5L1150.0 485.5M1154.0 470.5L1182.8 469.1M1154.0 470.5L1184.4 479.7M1150.0 485.5L1174.3 502.2M1150.0 485.5L1184.4 479.7M1174.3 502.2L1184.4 479.7M1174.3 502.2L1208.3 496.6M1177.3 517.2L1204.7 536.5M1177.3 517.2L1208.3 496.6M1177.3 517.2L1205.7 519.7M1204.7 536.5L1200.1 552.2M1204.7 536.5L1239.4 527.3M1204.7 536.5L1235.9 549.0M1200.1 552.2L1230.0 564.1M1200.1 552.2L1235.9 549.0M1124.9 412.3L1125.1 423.1M1125.1 423.1L1152.7 436.5M1125.1 423.1L1142.1 418.1M1152.7 436.5L1154.5 423.0M1152.7 436.5L1174.1 431.8M1152.7 436.5L1185.5 447.3M1149.1 450.3L1182.8 469.1M1149.1 450.3L1185.5 447.3M1182.8 469.1L1215.4 457.9M1182.8 469.1L1213.3 482.1M1184.4 479.7L1208.3 496.6M1184.4 479.7L1213.3 482.1M1208.3 496.6L1241.5 488.5M1208.3 496.6L1244.0 507.5M1205.7 519.7L1239.4 527.3M1205.7 519.7L1244.0 507.5M1239.4 527.3L1244.0 507.5M1239.4 527.3L1248.9 525.4M1239.4 527.3L1247.6 532.0M1235.9 549.0L1239.7 550.8M1235.9 549.0L1241.0 548.6M1189.0 439.8L1185.5 447.3M1185.5 447.3L1214.0 456.8M1213.3 482.1L1241.4 488.4M1213.3 482.1L1235.7 479.3M1244.0 507.5L1248.8 510.2M1244.0 507.5L1247.9 505.5M1244.0 507.5L1248.3 507.4" stroke="#ff0000" stroke-width="1" stroke-dasharray="5 2.5" fill="none" shape-rendering="crispEdges"/>
</g>
<path fill="none" stroke="#0000ff" stroke-width="2" d="M119 504L836.6 394A308.6 131.9 0 1 1 1002.2 647.4L626.5 706.5L225.5 628Z M754 462L871.9 444.5C879.4 446.2 903.0 451.1 917.0 455.0C931.0 458.9 942.9 462.1 955.8 467.6C968.7 473.1 984.1 480.8 994.4 488.0C1004.7 495.2 1012.1 503.6 1017.6 511.0C1023.1 518.4 1025.5 525.8 1027.3 532.3C1029.1 538.8 1028.9 543.6 1028.2 549.7C1027.5 555.8 1026.4 563.2 1023.4 569.0C1020.4 574.8 1015.6 580.2 1010.0 584.4C1004.4 588.6 993.3 592.4 990.0 594.0L880.5 611.5Z"/>
<path d="M335.5 578.0L335.5 637.8M339.8 573.1L339.8 631.4M344.1 568.2L344.1 625.1M348.3 563.4L348.3 618.7M352.6 558.5L352.6 612.4M356.9 553.6L356.9 606.0M361.2 548.7L361.2 599.7M365.4 543.8L365.4 593.3M369.7 539.0L369.7 587.0M374.0 534.1L374.0 580.6M378.3 529.2L378.3 574.3M382.5 524.3L382.5 567.9M386.8 519.4L386.8 561.6M391.1 514.5L391.1 555.2M395.4 509.7L395.4 548.9M399.6 504.8L399.6 542.5M403.9 499.9L403.9 536.2M408.2 495.0L408.2 529.8M412.5 490.1L412.5 523.5M416.7 485.3L416.7 517.1M421.0 480.4L421.0 510.8M425.3 475.5L425.3 504.4" stroke="#000" stroke-width="1.9" fill="none"/><path d="M332.5 626.8L338.5 626.8L337.0 632.8L335.5 635.8L334.0 632.8zM336.8 620.4L342.8 620.4L341.3 626.4L339.8 629.4L338.3 626.4zM341.1 614.1L347.1 614.1L345.6 620.1L344.1 623.1L342.6 620.1zM345.3 607.7L351.3 607.7L349.8 613.7L348.3 616.7L346.8 613.7zM349.6 601.4L355.6 601.4L354.1 607.4L352.6 610.4L351.1 607.4zM353.9 595.0L359.9 595.0L358.4 601.0L356.9 604.0L355.4 601.0zM358.2 588.7L364.2 588.7L362.7 594.7L361.2 597.7L359.7 594.7zM362.4 582.3L368.4 582.3L366.9 588.3L365.4 591.3L363.9 588.3zM366.7 576.0L372.7 576.0L371.2 582.0L369.7 585.0L368.2 582.0zM371.0 569.6L377.0 569.6L375.5 575.6L374.0 578.6L372.5 575.6zM375.3 563.3L381.3 563.3L379.8 569.3L378.3 572.3L376.8 569.3zM379.5 556.9L385.5 556.9L384.0 562.9L382.5 565.9L381.0 562.9zM383.8 550.6L389.8 550.6L388.3 556.6L386.8 559.6L385.3 556.6zM388.1 544.2L394.1 544.2L392.6 550.2L391.1 553.2L389.6 550.2zM392.4 537.9L398.4 537.9L396.9 543.9L395.4 546.9L393.9 543.9zM396.6 531.5L402.6 531.5L401.1 537.5L399.6 540.5L398.1 537.5zM400.9 525.2L406.9 525.2L405.4 531.2L403.9 534.2L402.4 531.2zM405.2 518.8L411.2 518.8L409.7 524.8L408.2 527.8L406.7 524.8zM409.5 512.5L415.5 512.5L414.0 518.5L412.5 521.5L411.0 518.5zM413.7 506.1L419.7 506.1L418.2 512.1L416.7 515.1L415.2 512.1zM418.0 499.8L424.0 499.8L422.5 505.8L421.0 508.8L419.5 505.8zM422.3 493.4L428.3 493.4L426.8 499.4L425.3 502.4L423.8 499.4z" fill="#000"/>
<path d="M335.5 578L425.3 475.5M335.5 637.8L425.3 504.4M335.5 578V637.8M425.3 475.5V504.4" stroke="#000" stroke-width="2" fill="none"/>
<path d="M174 469V503" stroke="#000" stroke-width="2"/>
<polygon points="154.0,505.0 186.0,501.0 195.0,512.8 163.4,516.8" fill="#ff00ff" stroke="#000" stroke-width="2.2" stroke-linejoin="round"/>
<path d="M271 582V614" stroke="#000" stroke-width="2"/>
<polygon points="252.0,618.5 281.0,612.7 291.5,625.0 260.0,629.0" fill="#ff00ff" stroke="#000" stroke-width="2.2" stroke-linejoin="round"/>
<path d="M357 441V475" stroke="#000" stroke-width="2"/>
<polygon points="329.5,477.6 369.0,470.5 384.0,482.7 339.6,490.8" fill="#00ff00" stroke="#000" stroke-width="2.2" stroke-linejoin="round"/>
<path d="M785.6 372V409" stroke="#000" stroke-width="2"/>
<polygon points="758.4,412.0 803.8,406.0 813.0,417.0 767.8,424.7" fill="#00ff00" stroke="#000" stroke-width="2.2" stroke-linejoin="round"/>
<path d="M1186 426V470" stroke="#000" stroke-width="2"/>
<polygon points="1163.4,473.0 1192.7,469.4 1208.0,488.3 1178.7,492.0" fill="#87ceeb" stroke="#000" stroke-width="2.2" stroke-linejoin="round"/>
<path d="M1175.8 526V556" stroke="#000" stroke-width="2"/>
<polygon points="1146.2,561.0 1190.0,553.7 1206.3,572.4 1160.0,578.9" fill="#ffff00" stroke="#000" stroke-width="2.2" stroke-linejoin="round"/>
<path d="M980 600V632" stroke="#000" stroke-width="2"/>
<polygon points="953.0,635.3 997.0,628.9 1008.0,640.8 964.0,648.0" fill="#00ff00" stroke="#000" stroke-width="2.2" stroke-linejoin="round"/>
<path d="M795 628V660" stroke="#000" stroke-width="2"/>
<polygon points="768.6,663.8 811.5,657.8 823.4,670.4 777.8,677.0" fill="#00ff00" stroke="#000" stroke-width="2.2" stroke-linejoin="round"/>
<path d="M637.5 655V685" stroke="#000" stroke-width="2"/>
<polygon points="618.8,688.0 647.0,683.4 659.4,696.7 629.7,700.6" fill="#ff00ff" stroke="#000" stroke-width="2.2" stroke-linejoin="round"/>
<path d="M446 611V644" stroke="#000" stroke-width="2"/>
<polygon points="426.0,647.5 455.0,643.6 465.0,654.5 437.0,659.2" fill="#ff00ff" stroke="#000" stroke-width="2.2" stroke-linejoin="round"/>
<path d="M743 488V539" stroke="#000" stroke-width="2"/>
<polygon points="722.0,544.7 753.0,541.0 762.0,553.0 733.0,555.6" fill="#ff00ff" stroke="#000" stroke-width="2.2" stroke-linejoin="round"/>
<rect x="180" y="459" width="30.0" height="11" fill="#fff"/><text x="181.5" y="467.8" font-size="9.6" font-family="Liberation Serif" fill="#000" letter-spacing="-0.3">650.00</text>
<rect x="276" y="571" width="30.0" height="11" fill="#fff"/><text x="277.5" y="579.8" font-size="9.6" font-family="Liberation Serif" fill="#000" letter-spacing="-0.3">650.00</text>
<rect x="362" y="431" width="30.0" height="11" fill="#fff"/><text x="363.5" y="439.8" font-size="9.6" font-family="Liberation Serif" fill="#000" letter-spacing="-0.3">650.00</text>
<rect x="791" y="362" width="30.0" height="11" fill="#fff"/><text x="792.5" y="370.8" font-size="9.6" font-family="Liberation Serif" fill="#000" letter-spacing="-0.3">700.00</text>
<rect x="1191" y="416" width="30.0" height="11" fill="#fff"/><text x="1192.5" y="424.8" font-size="9.6" font-family="Liberation Serif" fill="#000" letter-spacing="-0.3">900.00</text>
<rect x="1181" y="516" width="30.0" height="11" fill="#fff"/><text x="1182.5" y="524.8" font-size="9.6" font-family="Liberation Serif" fill="#000" letter-spacing="-0.3">650.00</text>
<rect x="985" y="589" width="30.0" height="11" fill="#fff"/><text x="986.5" y="597.8" font-size="9.6" font-family="Liberation Serif" fill="#000" letter-spacing="-0.3">650.00</text>
<rect x="800" y="616" width="30.0" height="11" fill="#fff"/><text x="801.5" y="624.8" font-size="9.6" font-family="Liberation Serif" fill="#000" letter-spacing="-0.3">650.00</text>
<rect x="643" y="645" width="30.0" height="11" fill="#fff"/><text x="644.5" y="653.8" font-size="9.6" font-family="Liberation Serif" fill="#000" letter-spacing="-0.3">600.00</text>
<rect x="451" y="601" width="30.0" height="11" fill="#fff"/><text x="452.5" y="609.8" font-size="9.6" font-family="Liberation Serif" fill="#000" letter-spacing="-0.3">650.00</text>
<rect x="747" y="477" width="34.5" height="11" fill="#fff"/><text x="748.5" y="485.8" font-size="9.6" font-family="Liberation Serif" fill="#000" letter-spacing="-0.3">1000.00</text>
<path d="M454 533V582" stroke="#000" stroke-width="2"/><polygon points="425.0,588.4 468.7,581.3 484.0,599.6 440.2,605.7" fill="#ffff00" stroke="#000" stroke-width="2.2" stroke-linejoin="round"/>
<rect x="329" y="566.5" width="23" height="11" fill="#fff"/><text x="330.5" y="575.3" font-size="9.6" font-family="Liberation Serif" fill="#000" letter-spacing="-0.3">12.00</text>
<rect x="419.5" y="463" width="19" height="11" fill="#fff"/><text x="421.0" y="471.8" font-size="9.6" font-family="Liberation Serif" fill="#000" letter-spacing="-0.3">6.00</text>
<path d="M749 556L762.6 571M721.8 552h3M758 546h6" stroke="#000" stroke-width="2"/>
<path d="M722.3 526.4L733 531.5L729 535.5zM728 532L737.5 537L734 541.5z" fill="#000" stroke="#000" stroke-width="1.2"/>
<rect x="740.5" y="535" width="5" height="5" fill="#000"/>
<rect x="723.6" y="513.5" width="30.0" height="11" fill="#fff"/><text x="725.1" y="522.3" font-size="9.6" font-family="Liberation Serif" fill="#000" letter-spacing="-0.3">300.00</text>
<rect x="760" y="533.5" width="30.0" height="11" fill="#fff"/><text x="761.5" y="542.3" font-size="9.6" font-family="Liberation Serif" fill="#000" letter-spacing="-0.3">200.00</text>
<path d="M470.8 444.7L470.8 506.7M485.6 442.4L485.6 504.4M500.4 440.1L500.4 502.1M515.2 437.8L515.2 499.8M530.0 435.5L530.0 497.5M544.8 433.2L544.8 495.2M559.6 430.9L559.6 492.9M574.4 428.6L574.4 490.6M589.2 426.3L589.2 488.3M604.0 424.0L604.0 486.0" stroke="#000" stroke-width="1.9" fill="none"/><path d="M467.8 495.7L473.8 495.7L472.3 501.7L470.8 504.7L469.3 501.7zM482.6 493.4L488.6 493.4L487.1 499.4L485.6 502.4L484.1 499.4zM497.4 491.1L503.4 491.1L501.9 497.1L500.4 500.1L498.9 497.1zM512.2 488.8L518.2 488.8L516.7 494.8L515.2 497.8L513.7 494.8zM527.0 486.5L533.0 486.5L531.5 492.5L530.0 495.5L528.5 492.5zM541.8 484.2L547.8 484.2L546.3 490.2L544.8 493.2L543.3 490.2zM556.6 481.9L562.6 481.9L561.1 487.9L559.6 490.9L558.1 487.9zM571.4 479.6L577.4 479.6L575.9 485.6L574.4 488.6L572.9 485.6zM586.2 477.3L592.2 477.3L590.7 483.3L589.2 486.3L587.7 483.3zM601.0 475.0L607.0 475.0L605.5 481.0L604.0 484.0L602.5 481.0z" fill="#000"/>
<path d="M604 402V438" stroke="#000" stroke-width="2"/><polygon points="578.3,441.6 622.7,434.0 631.6,445.4 587.0,451.8" fill="#00ff00" stroke="#000" stroke-width="2.2" stroke-linejoin="round"/><rect x="608" y="393" width="30.0" height="11" fill="#fff"/><text x="609.5" y="401.8" font-size="9.6" font-family="Liberation Serif" fill="#000" letter-spacing="-0.3">650.00</text>
<polygon points="465.4,507.6 604.0,486.0 686.0,580.0 733.0,572.0 734.5,634.6 587.0,656.0 456.5,497.0" fill="#ffff00"/>
<path d="M604.0 424.0L604.0 486.0M609.0 429.7L609.0 491.7M613.9 435.4L614.0 497.4M618.9 441.1L619.1 503.1M623.8 446.8L624.1 508.9M628.8 452.5L629.1 514.6M633.8 458.2L634.1 520.3M638.7 463.8L639.1 526.0M643.7 469.5L644.2 531.7M648.7 475.2L649.2 537.4M653.6 480.9L654.2 543.2M658.6 486.6L659.2 548.9M663.5 492.3L664.2 554.6M668.5 498.0L669.2 560.3M673.5 503.7L674.3 566.0M678.4 509.4L679.3 571.7M683.4 515.1L684.3 577.4M688.3 520.8L689.3 583.2M693.3 526.5L694.3 588.9M698.3 532.2L699.4 594.6M703.2 537.8L704.4 600.3M708.2 543.5L709.4 606.0M713.2 549.2L714.4 611.7M718.1 554.9L719.4 617.5M723.1 560.6L724.5 623.2M728.0 566.3L729.5 628.9M733.0 572.0L734.5 634.6" stroke="#000" stroke-width="1.9" fill="none"/><path d="M601.0 475.0L607.0 475.0L605.5 481.0L604.0 484.0L602.5 481.0zM606.0 480.7L612.0 480.7L610.5 486.7L609.0 489.7L607.5 486.7zM611.0 486.4L617.0 486.4L615.5 492.4L614.0 495.4L612.5 492.4zM616.1 492.1L622.1 492.1L620.6 498.1L619.1 501.1L617.6 498.1zM621.1 497.9L627.1 497.9L625.6 503.9L624.1 506.9L622.6 503.9zM626.1 503.6L632.1 503.6L630.6 509.6L629.1 512.6L627.6 509.6zM631.1 509.3L637.1 509.3L635.6 515.3L634.1 518.3L632.6 515.3zM636.1 515.0L642.1 515.0L640.6 521.0L639.1 524.0L637.6 521.0zM641.2 520.7L647.2 520.7L645.7 526.7L644.2 529.7L642.7 526.7zM646.2 526.4L652.2 526.4L650.7 532.4L649.2 535.4L647.7 532.4zM651.2 532.2L657.2 532.2L655.7 538.2L654.2 541.2L652.7 538.2zM656.2 537.9L662.2 537.9L660.7 543.9L659.2 546.9L657.7 543.9zM661.2 543.6L667.2 543.6L665.7 549.6L664.2 552.6L662.7 549.6zM666.2 549.3L672.2 549.3L670.8 555.3L669.2 558.3L667.8 555.3zM671.3 555.0L677.3 555.0L675.8 561.0L674.3 564.0L672.8 561.0zM676.3 560.7L682.3 560.7L680.8 566.7L679.3 569.7L677.8 566.7zM681.3 566.4L687.3 566.4L685.8 572.4L684.3 575.4L682.8 572.4zM686.3 572.2L692.3 572.2L690.8 578.2L689.3 581.2L687.8 578.2zM691.3 577.9L697.3 577.9L695.8 583.9L694.3 586.9L692.8 583.9zM696.4 583.6L702.4 583.6L700.9 589.6L699.4 592.6L697.9 589.6zM701.4 589.3L707.4 589.3L705.9 595.3L704.4 598.3L702.9 595.3zM706.4 595.0L712.4 595.0L710.9 601.0L709.4 604.0L707.9 601.0zM711.4 600.7L717.4 600.7L715.9 606.7L714.4 609.7L712.9 606.7zM716.4 606.5L722.4 606.5L720.9 612.5L719.4 615.5L717.9 612.5zM721.5 612.2L727.5 612.2L726.0 618.2L724.5 621.2L723.0 618.2zM726.5 617.9L732.5 617.9L731.0 623.9L729.5 626.9L728.0 623.9zM731.5 623.6L737.5 623.6L736.0 629.6L734.5 632.6L733.0 629.6z" fill="#000"/>
<path d="M456.0 447.0L456.5 497.0M461.0 452.7L461.5 503.1M466.1 458.4L466.5 509.2M471.1 464.1L471.6 515.3M476.2 469.8L476.6 521.5M481.2 475.5L481.6 527.6M486.2 481.2L486.6 533.7M491.3 486.8L491.6 539.8M496.3 492.5L496.7 545.9M501.3 498.2L501.7 552.0M506.4 503.9L506.7 558.2M511.4 509.6L511.7 564.3M516.5 515.3L516.7 570.4M521.5 521.0L521.8 576.5M526.5 526.7L526.8 582.6M531.6 532.4L531.8 588.7M536.6 538.1L536.8 594.8M541.7 543.8L541.8 601.0M546.7 549.5L546.8 607.1M551.7 555.2L551.9 613.2M556.8 560.8L556.9 619.3M561.8 566.5L561.9 625.4M566.8 572.2L566.9 631.5M571.9 577.9L571.9 637.7M576.9 583.6L577.0 643.8M582.0 589.3L582.0 649.9M587.0 595.0L587.0 656.0" stroke="#000" stroke-width="1.9" fill="none"/><path d="M453.5 486.0L459.5 486.0L458.0 492.0L456.5 495.0L455.0 492.0zM458.5 492.1L464.5 492.1L463.0 498.1L461.5 501.1L460.0 498.1zM463.5 498.2L469.5 498.2L468.0 504.2L466.5 507.2L465.0 504.2zM468.6 504.3L474.6 504.3L473.1 510.3L471.6 513.3L470.1 510.3zM473.6 510.5L479.6 510.5L478.1 516.5L476.6 519.5L475.1 516.5zM478.6 516.6L484.6 516.6L483.1 522.6L481.6 525.6L480.1 522.6zM483.6 522.7L489.6 522.7L488.1 528.7L486.6 531.7L485.1 528.7zM488.6 528.8L494.6 528.8L493.1 534.8L491.6 537.8L490.1 534.8zM493.7 534.9L499.7 534.9L498.2 540.9L496.7 543.9L495.2 540.9zM498.7 541.0L504.7 541.0L503.2 547.0L501.7 550.0L500.2 547.0zM503.7 547.2L509.7 547.2L508.2 553.2L506.7 556.2L505.2 553.2zM508.7 553.3L514.7 553.3L513.2 559.3L511.7 562.3L510.2 559.3zM513.7 559.4L519.7 559.4L518.2 565.4L516.7 568.4L515.2 565.4zM518.8 565.5L524.8 565.5L523.2 571.5L521.8 574.5L520.2 571.5zM523.8 571.6L529.8 571.6L528.3 577.6L526.8 580.6L525.3 577.6zM528.8 577.7L534.8 577.7L533.3 583.7L531.8 586.7L530.3 583.7zM533.8 583.8L539.8 583.8L538.3 589.8L536.8 592.8L535.3 589.8zM538.8 590.0L544.8 590.0L543.3 596.0L541.8 599.0L540.3 596.0zM543.8 596.1L549.8 596.1L548.3 602.1L546.8 605.1L545.3 602.1zM548.9 602.2L554.9 602.2L553.4 608.2L551.9 611.2L550.4 608.2zM553.9 608.3L559.9 608.3L558.4 614.3L556.9 617.3L555.4 614.3zM558.9 614.4L564.9 614.4L563.4 620.4L561.9 623.4L560.4 620.4zM563.9 620.5L569.9 620.5L568.4 626.5L566.9 629.5L565.4 626.5zM568.9 626.7L574.9 626.7L573.4 632.7L571.9 635.7L570.4 632.7zM574.0 632.8L580.0 632.8L578.5 638.8L577.0 641.8L575.5 638.8zM579.0 638.9L585.0 638.9L583.5 644.9L582.0 647.9L580.5 644.9zM584.0 645.0L590.0 645.0L588.5 651.0L587.0 654.0L585.5 651.0z" fill="#000"/>
<path d="M587.0 595.0L587.0 656.0M601.6 592.7L601.8 653.9M616.2 590.4L616.5 651.7M630.8 588.1L631.2 649.6M645.4 585.8L646.0 647.4M660.0 583.5L660.8 645.3M674.6 581.2L675.5 643.2M689.2 578.9L690.2 641.0M703.8 576.6L705.0 638.9M718.4 574.3L719.8 636.7M733.0 572.0L734.5 634.6" stroke="#000" stroke-width="1.9" fill="none"/><path d="M584.0 645.0L590.0 645.0L588.5 651.0L587.0 654.0L585.5 651.0zM598.8 642.9L604.8 642.9L603.2 648.9L601.8 651.9L600.2 648.9zM613.5 640.7L619.5 640.7L618.0 646.7L616.5 649.7L615.0 646.7zM628.2 638.6L634.2 638.6L632.8 644.6L631.2 647.6L629.8 644.6zM643.0 636.4L649.0 636.4L647.5 642.4L646.0 645.4L644.5 642.4zM657.8 634.3L663.8 634.3L662.2 640.3L660.8 643.3L659.2 640.3zM672.5 632.2L678.5 632.2L677.0 638.2L675.5 641.2L674.0 638.2zM687.2 630.0L693.2 630.0L691.8 636.0L690.2 639.0L688.8 636.0zM702.0 627.9L708.0 627.9L706.5 633.9L705.0 636.9L703.5 633.9zM716.8 625.7L722.8 625.7L721.2 631.7L719.8 634.7L718.2 631.7zM731.5 623.6L737.5 623.6L736.0 629.6L734.5 632.6L733.0 629.6z" fill="#000"/>
<path d="M456 447L604 424L733 572L587 595Z M733 572L734.5 634.6L587 656L587 595 M456.5 497L587 656 M456 447V497 M600 511L456 447M600 511L604 424M600 511L733 572M600 511L587 595" stroke="#000" stroke-width="2" fill="none"/>
<path d="M465.4 507.6L604 486L734.5 634.6" stroke="#000" stroke-width="1.8" fill="none"/>
<rect x="594.8" y="511" width="23" height="11" fill="#fff"/><text x="596.3" y="519.8" font-size="9.6" font-family="Liberation Serif" fill="#000" letter-spacing="-0.3">20.00</text>
<rect x="459.5" y="523" width="34.5" height="11" fill="#fff"/><text x="461.0" y="531.8" font-size="9.6" font-family="Liberation Serif" fill="#000" letter-spacing="-0.3">1000.00</text>
<rect x="643" y="645" width="30.0" height="11" fill="#fff"/><text x="644.5" y="653.8" font-size="9.6" font-family="Liberation Serif" fill="#000" letter-spacing="-0.3">600.00</text>
<path d="M958.0 386.0L958.0 431.0M972.3 388.3L972.3 434.5M986.7 390.6L986.7 438.0M1001.0 392.9L1001.0 441.5M1015.3 395.2L1015.3 445.0M1029.7 397.5L1029.7 448.5M1044.0 399.8L1044.0 452.0M1058.3 402.0L1058.3 455.5M1072.7 404.3L1072.7 459.0M1087.0 406.6L1087.0 462.5M1101.3 408.9L1101.3 466.0M1115.7 411.2L1115.7 469.5M1130.0 413.5L1130.0 473.0" stroke="#000" stroke-width="1.9" fill="none"/><path d="M955.0 420.0L961.0 420.0L959.5 426.0L958.0 429.0L956.5 426.0zM969.3 423.5L975.3 423.5L973.8 429.5L972.3 432.5L970.8 429.5zM983.7 427.0L989.7 427.0L988.2 433.0L986.7 436.0L985.2 433.0zM998.0 430.5L1004.0 430.5L1002.5 436.5L1001.0 439.5L999.5 436.5zM1012.3 434.0L1018.3 434.0L1016.8 440.0L1015.3 443.0L1013.8 440.0zM1026.7 437.5L1032.7 437.5L1031.2 443.5L1029.7 446.5L1028.2 443.5zM1041.0 441.0L1047.0 441.0L1045.5 447.0L1044.0 450.0L1042.5 447.0zM1055.3 444.5L1061.3 444.5L1059.8 450.5L1058.3 453.5L1056.8 450.5zM1069.7 448.0L1075.7 448.0L1074.2 454.0L1072.7 457.0L1071.2 454.0zM1084.0 451.5L1090.0 451.5L1088.5 457.5L1087.0 460.5L1085.5 457.5zM1098.3 455.0L1104.3 455.0L1102.8 461.0L1101.3 464.0L1099.8 461.0zM1112.7 458.5L1118.7 458.5L1117.2 464.5L1115.7 467.5L1114.2 464.5zM1127.0 462.0L1133.0 462.0L1131.5 468.0L1130.0 471.0L1128.5 468.0z" fill="#000"/>
<rect x="962" y="386" width="22" height="11" fill="#fff"/><text x="963.5" y="394.8" font-size="9.6" font-family="Liberation Serif" fill="#000" letter-spacing="-0.3">15.00</text>
<path d="M1130.0 413.5L1130.0 473.0M1134.4 427.4L1134.4 478.4M1138.8 441.3L1138.8 483.8M1143.2 455.2L1143.2 489.2M1147.6 469.1L1147.6 494.6M1152.0 483.0L1152.0 500.0" stroke="#000" stroke-width="1.9" fill="none"/><path d="M1127.0 462.0L1133.0 462.0L1131.5 468.0L1130.0 471.0L1128.5 468.0zM1131.4 467.4L1137.4 467.4L1135.9 473.4L1134.4 476.4L1132.9 473.4zM1135.8 472.8L1141.8 472.8L1140.3 478.8L1138.8 481.8L1137.3 478.8zM1140.2 478.2L1146.2 478.2L1144.7 484.2L1143.2 487.2L1141.7 484.2zM1144.6 483.6L1150.6 483.6L1149.1 489.6L1147.6 492.6L1146.1 489.6zM1149.0 489.0L1155.0 489.0L1153.5 495.0L1152.0 498.0L1150.5 495.0z" fill="#000"/>
<path d="M1047.3 375V409" stroke="#000" stroke-width="2"/><polygon points="1017.8,412.2 1053.4,406.9 1076.5,421.1 1032.0,428.2" fill="#ffff00" stroke="#000" stroke-width="2.2" stroke-linejoin="round"/><rect x="1052" y="364" width="30.0" height="11" fill="#fff"/><text x="1053.5" y="372.8" font-size="9.6" font-family="Liberation Serif" fill="#000" letter-spacing="-0.3">700.00</text>
<polygon points="958.0,431.0 1129.0,475.0 1137.0,481.0 1152.0,500.0 1087.0,580.0" fill="#ffff00"/>
<path d="M958.0 386.0L958.0 431.0M962.8 391.9L962.8 436.5M967.6 397.8L967.6 442.0M972.3 403.7L972.3 447.6M977.1 409.6L977.1 453.1M981.9 415.4L981.9 458.6M986.7 421.3L986.7 464.1M991.4 427.2L991.4 469.6M996.2 433.1L996.2 475.1M1001.0 439.0L1001.0 480.7M1005.8 444.9L1005.8 486.2M1010.6 450.8L1010.6 491.7M1015.3 456.7L1015.3 497.2M1020.1 462.6L1020.1 502.7M1024.9 468.4L1024.9 508.3M1029.7 474.3L1029.7 513.8M1034.4 480.2L1034.4 519.3M1039.2 486.1L1039.2 524.8M1044.0 492.0L1044.0 530.3M1048.8 497.9L1048.8 535.9M1053.6 503.8L1053.6 541.4M1058.3 509.7L1058.3 546.9M1063.1 515.6L1063.1 552.4M1067.9 521.4L1067.9 557.9M1072.7 527.3L1072.7 563.4M1077.4 533.2L1077.4 569.0M1082.2 539.1L1082.2 574.5M1087.0 545.0L1087.0 580.0" stroke="#000" stroke-width="1.9" fill="none"/><path d="M955.0 420.0L961.0 420.0L959.5 426.0L958.0 429.0L956.5 426.0zM959.8 425.5L965.8 425.5L964.3 431.5L962.8 434.5L961.3 431.5zM964.6 431.0L970.6 431.0L969.1 437.0L967.6 440.0L966.1 437.0zM969.3 436.6L975.3 436.6L973.8 442.6L972.3 445.6L970.8 442.6zM974.1 442.1L980.1 442.1L978.6 448.1L977.1 451.1L975.6 448.1zM978.9 447.6L984.9 447.6L983.4 453.6L981.9 456.6L980.4 453.6zM983.7 453.1L989.7 453.1L988.2 459.1L986.7 462.1L985.2 459.1zM988.4 458.6L994.4 458.6L992.9 464.6L991.4 467.6L989.9 464.6zM993.2 464.1L999.2 464.1L997.7 470.1L996.2 473.1L994.7 470.1zM998.0 469.7L1004.0 469.7L1002.5 475.7L1001.0 478.7L999.5 475.7zM1002.8 475.2L1008.8 475.2L1007.3 481.2L1005.8 484.2L1004.3 481.2zM1007.6 480.7L1013.6 480.7L1012.1 486.7L1010.6 489.7L1009.1 486.7zM1012.3 486.2L1018.3 486.2L1016.8 492.2L1015.3 495.2L1013.8 492.2zM1017.1 491.7L1023.1 491.7L1021.6 497.7L1020.1 500.7L1018.6 497.7zM1021.9 497.3L1027.9 497.3L1026.4 503.3L1024.9 506.3L1023.4 503.3zM1026.7 502.8L1032.7 502.8L1031.2 508.8L1029.7 511.8L1028.2 508.8zM1031.4 508.3L1037.4 508.3L1035.9 514.3L1034.4 517.3L1032.9 514.3zM1036.2 513.8L1042.2 513.8L1040.7 519.8L1039.2 522.8L1037.7 519.8zM1041.0 519.3L1047.0 519.3L1045.5 525.3L1044.0 528.3L1042.5 525.3zM1045.8 524.9L1051.8 524.9L1050.3 530.9L1048.8 533.9L1047.3 530.9zM1050.6 530.4L1056.6 530.4L1055.1 536.4L1053.6 539.4L1052.1 536.4zM1055.3 535.9L1061.3 535.9L1059.8 541.9L1058.3 544.9L1056.8 541.9zM1060.1 541.4L1066.1 541.4L1064.6 547.4L1063.1 550.4L1061.6 547.4zM1064.9 546.9L1070.9 546.9L1069.4 552.9L1067.9 555.9L1066.4 552.9zM1069.7 552.4L1075.7 552.4L1074.2 558.4L1072.7 561.4L1071.2 558.4zM1074.4 558.0L1080.4 558.0L1078.9 564.0L1077.4 567.0L1075.9 564.0zM1079.2 563.5L1085.2 563.5L1083.7 569.5L1082.2 572.5L1080.7 569.5zM1084.0 569.0L1090.0 569.0L1088.5 575.0L1087.0 578.0L1085.5 575.0z" fill="#000"/>
<path d="M1087.0 545.0L1087.0 580.0M1092.0 540.2L1092.0 573.8M1097.0 535.5L1097.0 567.7M1102.0 530.7L1102.0 561.5M1107.0 525.9L1107.0 555.4M1112.0 521.2L1112.0 549.2M1117.0 516.4L1117.0 543.1M1122.0 511.6L1122.0 536.9M1127.0 506.8L1127.0 530.8M1132.0 502.1L1132.0 524.6M1137.0 497.3L1137.0 518.5M1142.0 492.5L1142.0 512.3M1147.0 487.8L1147.0 506.2M1152.0 483.0L1152.0 500.0" stroke="#000" stroke-width="1.9" fill="none"/><path d="M1084.0 569.0L1090.0 569.0L1088.5 575.0L1087.0 578.0L1085.5 575.0zM1089.0 562.8L1095.0 562.8L1093.5 568.8L1092.0 571.8L1090.5 568.8zM1094.0 556.7L1100.0 556.7L1098.5 562.7L1097.0 565.7L1095.5 562.7zM1099.0 550.5L1105.0 550.5L1103.5 556.5L1102.0 559.5L1100.5 556.5zM1104.0 544.4L1110.0 544.4L1108.5 550.4L1107.0 553.4L1105.5 550.4zM1109.0 538.2L1115.0 538.2L1113.5 544.2L1112.0 547.2L1110.5 544.2zM1114.0 532.1L1120.0 532.1L1118.5 538.1L1117.0 541.1L1115.5 538.1zM1119.0 525.9L1125.0 525.9L1123.5 531.9L1122.0 534.9L1120.5 531.9zM1124.0 519.8L1130.0 519.8L1128.5 525.8L1127.0 528.8L1125.5 525.8zM1129.0 513.6L1135.0 513.6L1133.5 519.6L1132.0 522.6L1130.5 519.6zM1134.0 507.5L1140.0 507.5L1138.5 513.5L1137.0 516.5L1135.5 513.5zM1139.0 501.3L1145.0 501.3L1143.5 507.3L1142.0 510.3L1140.5 507.3zM1144.0 495.2L1150.0 495.2L1148.5 501.2L1147.0 504.2L1145.5 501.2zM1149.0 489.0L1155.0 489.0L1153.5 495.0L1152.0 498.0L1150.5 495.0z" fill="#000"/>
<path d="M958 386L1130 413.5L1152 483L1087 545Z M1152 483V500L1087 580L958 431V386 M1087 545V580 M1084 456L958 386M1084 456L1130 413.5M1084 456L1152 483M1084 456L1087 545" stroke="#000" stroke-width="2" fill="none"/>
<path d="M958 431L1130 473L1152 500" stroke="#000" stroke-width="1.8" fill="none"/>
<rect x="1129.8" y="415.5" width="23" height="11" fill="#fff"/><text x="1131.3" y="424.3" font-size="9.6" font-family="Liberation Serif" fill="#000" letter-spacing="-0.3">20.00</text>
<rect x="1151" y="485" width="17" height="11" fill="#fff"/><text x="1152.5" y="493.8" font-size="9.6" font-family="Liberation Serif" fill="#000" letter-spacing="-0.3">5.00</text>
<rect x="1087" y="550" width="23" height="11" fill="#fff"/><text x="1088.5" y="558.8" font-size="9.6" font-family="Liberation Serif" fill="#000" letter-spacing="-0.3">10.00</text>
<path d="M814 580L819 604" stroke="#000" stroke-width="3"/>
<path d="M811 581l6 -2 0 6zM815 596l6 0-3 8z" fill="#000"/>
<g transform="translate(810,565) rotate(-80)"><rect x="-14" y="-6.5" width="28" height="13" fill="#fff"/><text x="-12" y="4" font-size="10.5" font-style="italic" font-family="Liberation Serif" fill="#000">50.00</text></g>
<g transform="translate(823,620) rotate(-80)"><rect x="-14" y="-6.5" width="28" height="13" fill="#fff"/><text x="-12" y="4" font-size="10.5" font-style="italic" font-family="Liberation Serif" fill="#000">50.00</text></g>
<rect x="14" y="367.0" width="21" height="21" fill="#e00000" stroke="#000" stroke-width="2"/>
<text x="40" y="381.0" font-size="9.1" font-family="Liberation Serif" fill="#000" letter-spacing="-0.15">3.32 [cm]</text>
<rect x="14" y="391.5" width="21" height="21" fill="#e04e00" stroke="#000" stroke-width="2"/>
<text x="40" y="405.5" font-size="9.1" font-family="Liberation Serif" fill="#000" letter-spacing="-0.15">3.26 [cm]</text>
<rect x="14" y="416.0" width="21" height="21" fill="#e09800" stroke="#000" stroke-width="2"/>
<text x="40" y="430.0" font-size="9.1" font-family="Liberation Serif" fill="#000" letter-spacing="-0.15">3.20 [cm]</text>
<rect x="14" y="440.5" width="21" height="21" fill="#e0e000" stroke="#000" stroke-width="2"/>
<text x="40" y="454.5" font-size="9.1" font-family="Liberation Serif" fill="#000" letter-spacing="-0.15">3.14 [cm]</text>
<rect x="14" y="465.0" width="21" height="21" fill="#98e000" stroke="#000" stroke-width="2"/>
<text x="40" y="479.0" font-size="9.1" font-family="Liberation Serif" fill="#000" letter-spacing="-0.15">3.08 [cm]</text>
<rect x="14" y="489.5" width="21" height="21" fill="#4ee000" stroke="#000" stroke-width="2"/>
<text x="40" y="503.5" font-size="9.1" font-family="Liberation Serif" fill="#000" letter-spacing="-0.15">3.02 [cm]</text>
<rect x="14" y="514.0" width="21" height="21" fill="#00e000" stroke="#000" stroke-width="2"/>
<text x="40" y="528.0" font-size="9.1" font-family="Liberation Serif" fill="#000" letter-spacing="-0.15">2.96 [cm]</text>
<rect x="14" y="538.5" width="21" height="21" fill="#00e04e" stroke="#000" stroke-width="2"/>
<text x="40" y="552.5" font-size="9.1" font-family="Liberation Serif" fill="#000" letter-spacing="-0.15">2.90 [cm]</text>
<rect x="14" y="563.0" width="21" height="21" fill="#00e098" stroke="#000" stroke-width="2"/>
<text x="40" y="577.0" font-size="9.1" font-family="Liberation Serif" fill="#000" letter-spacing="-0.15">2.84 [cm]</text>
<rect x="14" y="587.5" width="21" height="21" fill="#00e0e0" stroke="#000" stroke-width="2"/>
<text x="40" y="601.5" font-size="9.1" font-family="Liberation Serif" fill="#000" letter-spacing="-0.15">2.78 [cm]</text>
<rect x="14" y="612.0" width="21" height="21" fill="#0098e0" stroke="#000" stroke-width="2"/>
<text x="40" y="626.0" font-size="9.1" font-family="Liberation Serif" fill="#000" letter-spacing="-0.15">2.72 [cm]</text>
<rect x="14" y="636.5" width="21" height="21" fill="#004ee0" stroke="#000" stroke-width="2"/>
<text x="40" y="650.5" font-size="9.1" font-family="Liberation Serif" fill="#000" letter-spacing="-0.15">2.66 [cm]</text>
<rect x="14" y="661.0" width="21" height="21" fill="#0000e0" stroke="#000" stroke-width="2"/>
<text x="40" y="675.0" font-size="9.1" font-family="Liberation Serif" fill="#000" letter-spacing="-0.15">2.60 [cm]</text>
<text x="120" y="350.6" font-size="14.3" font-family="Liberation Serif" font-style="italic" fill="#000">Method (6) (Layered soil model)</text>
<text x="120" y="368.5" font-size="14.3" font-family="Liberation Serif" font-style="italic" fill="#000">Modulus of Compressibility (Iteration)</text>
<text x="120" y="736" font-size="14.3" letter-spacing="0.15" font-family="Liberation Serif" font-style="italic" fill="#000">Settlements s [cm]</text>
<text x="120" y="754" font-size="14.3" letter-spacing="0.17" font-family="Liberation Serif" font-style="italic" fill="#000">Max. s =3.39 at node 80, Min. s = 2.57 at node 21</text>
</svg>
<div class="a" style="left:0;top:0;width:1280px;height:21px;background:linear-gradient(#c6e0fa,#b9d7f6 60%,#b4d3f4)"></div>
<div class="a" style="left:0;top:21px;width:1280px;height:1px;background:#5f6b78"></div>
<svg class="a" style="left:0px;top:2px;" width="18" height="18" viewBox="0 0 18 18"><rect x="0.5" y="0.5" width="17" height="17" fill="#111"/><rect x="2" y="2" width="14" height="6" fill="#c8d0d8"/><rect x="2" y="10" width="14" height="6" fill="#1ec81e"/><path d="M2 9.5h14" stroke="#e01010" stroke-width="1.5"/><path d="M9 3v5" stroke="#1030e0" stroke-width="1.5"/><path d="M7 6l2 2.5 2-2.5" fill="#1030e0"/><path d="M3 16 q6 -6 12 0" fill="#111"/></svg>
<div class="a" style="left:23px;top:5px;width:1px;height:13px;background:#6a7c90"></div>
<svg class="a" style="left:33px;top:3px;" width="16" height="16" viewBox="0 0 16 16"><path d="M3 1.5h7l3 3v10H3z" fill="#fff" stroke="#6a7a8a" opacity="1"/><path d="M10 1.5v3h3" fill="none" stroke="#6a7a8a" opacity="1"/></svg>
<svg class="a" style="left:54px;top:3px;" width="18" height="16" viewBox="0 0 18 16"><path d="M1 4h5l1 1.5h7v9H1z" fill="#e8b840" stroke="#a07820"/><path d="M3 8h13l-2 6.5H1z" fill="#f6d36a" stroke="#a07820"/><path d="M9 4 q3-3 6 0" fill="none" stroke="#5a6a7a"/></svg>
<svg class="a" style="left:77px;top:3px;" width="16" height="16" viewBox="0 0 16 16"><path d="M3 1.5h7l3 3v10H3z" fill="#f4f6f8" stroke="#b8c2cc" opacity="1"/><path d="M10 1.5v3h3" fill="none" stroke="#b8c2cc" opacity="1"/></svg>
<svg class="a" style="left:99px;top:3px;" width="16" height="16" viewBox="0 0 16 16"><path d="M2 3h8l4 4v8H2z" fill="#d8dde4" stroke="#b0b8c0"/><path d="M6 9l6-5v10z" fill="#c0c6cc"/></svg>
<svg class="a" style="left:121px;top:2px;" width="18" height="18" viewBox="0 0 18 18"><path d="M1 5h5l1 1.5h8v6H1z" fill="#e6eaef" stroke="#7a8490"/><path d="M9 3 q3-3 6 1" fill="none" stroke="#6a7480"/><text x="2" y="17" font-size="6" font-family="Liberation Sans" fill="#555">dxf</text></svg>
<svg class="a" style="left:143px;top:2px;" width="18" height="18" viewBox="0 0 18 18"><path d="M1 5h5l1 1.5h8v6H1z" fill="#e6eaef" stroke="#7a8490"/><path d="M9 3 q3-3 6 1" fill="none" stroke="#6a7480"/><text x="2" y="17" font-size="6" font-family="Liberation Sans" fill="#555">SDF</text></svg>
<svg class="a" style="left:165px;top:2px;" width="18" height="18" viewBox="0 0 18 18"><text x="1" y="6" font-size="5.5" font-family="Liberation Sans" fill="#555">dxF</text><rect x="5" y="7" width="10" height="10" fill="#6c7884"/><rect x="7" y="7" width="6" height="3" fill="#dfe4e8"/><rect x="7" y="12" width="6" height="4" fill="#aab4be"/></svg>
<svg class="a" style="left:188px;top:2px;" width="18" height="18" viewBox="0 0 18 18"><text x="1" y="6" font-size="5.5" font-family="Liberation Sans" fill="#555">SDF</text><rect x="5" y="7" width="10" height="10" fill="#6c7884"/><rect x="7" y="7" width="6" height="3" fill="#dfe4e8"/><rect x="7" y="12" width="6" height="4" fill="#aab4be"/></svg>
<svg class="a" style="left:210px;top:3px;" width="16" height="16" viewBox="0 0 16 16"><rect x="2" y="2" width="12" height="12" fill="#a8b0b8"/><rect x="4" y="2" width="8" height="4" fill="#e4e8ec"/><rect x="4" y="9" width="8" height="5" fill="#ccd2d8"/></svg>
<svg class="a" style="left:232px;top:3px;" width="16" height="16" viewBox="0 0 16 16"><rect x="2" y="2" width="11" height="12" fill="#c8ced4"/><rect x="4" y="3" width="7" height="4" fill="#eceff2"/><path d="M6 9l8 6" stroke="#9aa4ae" stroke-width="1.5"/></svg>
<svg class="a" style="left:254px;top:3px;" width="16" height="16" viewBox="0 0 16 16"><path d="M2 2h8l4 4v9H2z" fill="#f2dc7a" stroke="#c8a840"/><path d="M4 5h5v-2l3 3-3 3v-2H4z" fill="#2a7fd0"/></svg>
<svg class="a" style="left:274px;top:2px;" width="20" height="18" viewBox="0 0 20 18"><rect x="5" y="1" width="10" height="6" fill="#fff" stroke="#777"/><rect x="1" y="6" width="18" height="8" rx="1" fill="#5c5c5c"/><rect x="3" y="12" width="14" height="4" fill="#e8e8e8" stroke="#777"/><circle cx="16" cy="4" r="3" fill="#2a9a3a"/><path d="M14.5 4l1 1 2-2" stroke="#fff" fill="none"/></svg>
<svg class="a" style="left:296px;top:2px;" width="18" height="18" viewBox="0 0 18 18"><path d="M6 8 q6 -6 10 0 q2 5 -2 10" fill="none" stroke="#a4b0c0" stroke-width="2.6"/><path d="M1 3v9h9z" fill="#a4b0c0"/></svg>
<svg class="a" style="left:319px;top:9px;" width="8" height="5" viewBox="0 0 8 5"><path d="M0 0l3 2.5L0 5zM4 0l3 2.5L4 5z" fill="#111"/></svg>
<div class="a" style="left:337px;top:5px;width:1px;height:12px;background:#7a8ca0"></div>
<div class="a" style="left:357px;top:0;width:69px;height:22px;background:radial-gradient(ellipse 30px 8px at 50% 100%,#fff3e0,rgba(255,240,220,0) 100%),linear-gradient(#e9c8bc,#f0c2a8 70%,#f6c9a6);border:1px solid #f2955a;border-top:none"></div>
<div class="a t" style="left:370px;top:3px;font-size:11.5px;color:#2c3e58;">Graphic</div>
<div class="a t" style="left:439px;top:3px;font-size:11.8px;color:#111;letter-spacing:-0.3px">ELPLA - [Ex2]</div>
<div class="a" style="left:678px;top:-3px;width:90px;height:7px;background:#8a68a2;filter:blur(1.5px);border-radius:3px"></div>
<div class="a" style="left:682px;top:8px;width:80px;height:9px;background:rgba(150,160,205,0.7);filter:blur(2px)"></div>
<div class="a" style="left:1174px;top:0;width:55px;height:17px;border:1px solid #6b7a8c;border-top:none;border-radius:0 0 0 4px;background:linear-gradient(#d8e6f4,#c4d6ea 50%,#aec4dc 55%,#c8dcf0)"></div>
<div class="a" style="left:1201px;top:0;width:1px;height:16px;background:#7a8a9c"></div>
<div class="a" style="left:1229px;top:0;width:48px;height:17px;border:1px solid #6b4a40;border-top:none;border-radius:0 0 4px 0;background:linear-gradient(#e8a08c,#d4604a 50%,#c0361e 55%,#d86a50)"></div>
<div class="a" style="left:1183px;top:8px;width:10px;height:3px;background:#fff;border:1px solid #3a4a5a"></div>
<svg class="a" style="left:1208px;top:3px;" width="14" height="12" viewBox="0 0 14 12"><rect x="4.5" y="1.5" width="7" height="7" fill="none" stroke="#2a3a4a" stroke-width="1.2"/><rect x="2.5" y="3.5" width="7" height="7" fill="#fff" stroke="#2a3a4a" stroke-width="1.2"/><rect x="4.5" y="5.5" width="3" height="3" fill="none" stroke="#2a3a4a"/></svg>
<svg class="a" style="left:1245px;top:2px;" width="16" height="13" viewBox="0 0 16 13"><path d="M3 2l10 9M13 2L3 11" stroke="#3a2a2a" stroke-width="4"/><path d="M3 2l10 9M13 2L3 11" stroke="#fff" stroke-width="2.4"/></svg>
<div class="a" style="left:0;top:22px;width:1280px;height:23px;background:#dfe8f3"></div>
<div class="a" style="left:0;top:45px;width:1280px;height:1px;background:#f3a36e"></div>
<div class="a" style="left:0;top:23px;width:56px;height:22px;border-radius:0 4px 0 0;background:linear-gradient(#5b97d6,#3a75c0 45%,#1d4f9c 50%,#2a63b0 85%,#4c8ad0)"></div>
<svg class="a" style="left:15px;top:27px;" width="30" height="14" viewBox="0 0 30 14"><rect x="0.5" y="0.5" width="13" height="12" fill="#f0f4f8" stroke="#c8d4e0"/><path d="M3 1v12" stroke="#a8b4c4"/><path d="M6 3.5h6M6 6h6M6 8.5h6M6 11h6" stroke="#3a5a90" stroke-width="1.2"/><path d="M19 4h8l-4 4z" fill="#fff"/></svg>
<div class="a t" style="left:70px;top:28px;font-size:11.5px;color:#172642;">Data</div>
<div class="a t" style="left:122px;top:28px;font-size:11.5px;color:#172642;">Solver</div>
<div class="a t" style="left:181px;top:28px;font-size:11.5px;color:#172642;">Results</div>
<div class="a t" style="left:248px;top:28px;font-size:11.5px;color:#172642;">Setting</div>
<div class="a t" style="left:314px;top:28px;font-size:11.5px;color:#172642;">View</div>
<div class="a" style="left:357px;top:22px;width:1px;height:18px;background:#b8c6d6"></div>
<div class="a" style="left:425px;top:22px;width:1px;height:18px;background:#b8c6d6"></div>
<div class="a" style="left:359px;top:23px;width:65px;height:24px;background:#fafcfe;border:1px solid #f39a5e;border-bottom:none;border-radius:3px 3px 0 0"></div>
<div class="a t" style="left:371px;top:28px;font-size:11.5px;color:#15428b;">Graphic</div>
<svg class="a" style="left:1259px;top:25px;" width="18" height="18" viewBox="0 0 18 18"><circle cx="9" cy="9" r="7.5" fill="#2468c8" stroke="#b8cce4"/><circle cx="9" cy="9" r="6" fill="#3b7fd8"/><text x="5.5" y="13" font-size="11" font-weight="bold" font-family="Liberation Sans" fill="#fff">?</text></svg>
<div class="a" style="left:0;top:46px;width:1280px;height:91px;background:linear-gradient(#f8fbfe,#e9f0f9 28%,#e0e9f5 60%,#dbe5f2)"></div>
<div class="a" style="left:0;top:136px;width:1280px;height:1px;background:#bfcbd9"></div>
<div class="a" style="left:0;top:137px;width:1280px;height:1px;background:#a3b2c4"></div>
<div class="a" style="left:140px;top:52px;width:1px;height:80px;background:linear-gradient(rgba(170,186,206,0.2),#b3c1d3 12%,#b3c1d3 88%,rgba(170,186,206,0.2))"></div>
<div class="a" style="left:382px;top:52px;width:1px;height:80px;background:linear-gradient(rgba(170,186,206,0.2),#b3c1d3 12%,#b3c1d3 88%,rgba(170,186,206,0.2))"></div>
<div class="a" style="left:575px;top:52px;width:1px;height:80px;background:linear-gradient(rgba(170,186,206,0.2),#b3c1d3 12%,#b3c1d3 88%,rgba(170,186,206,0.2))"></div>
<div class="a" style="left:1017px;top:52px;width:1px;height:80px;background:linear-gradient(rgba(170,186,206,0.2),#b3c1d3 12%,#b3c1d3 88%,rgba(170,186,206,0.2))"></div>
<div class="a" style="left:1072px;top:52px;width:1px;height:80px;background:linear-gradient(rgba(170,186,206,0.2),#b3c1d3 12%,#b3c1d3 88%,rgba(170,186,206,0.2))"></div>
<div class="a" style="left:1125px;top:52px;width:1px;height:80px;background:linear-gradient(rgba(170,186,206,0.2),#b3c1d3 12%,#b3c1d3 88%,rgba(170,186,206,0.2))"></div>
<div class="a gl" style="left:20px;top:121px;width:100px">Print</div>
<div class="a gl" style="left:210px;top:121px;width:100px">Sending</div>
<div class="a gl" style="left:428px;top:121px;width:100px">Options</div>
<div class="a gl" style="left:746px;top:121px;width:100px">Window</div>
<div class="a gl" style="left:994px;top:121px;width:100px">Refresh</div>
<div class="a gl" style="left:1048px;top:121px;width:100px">Close</div>
<div class="a bt" style="left:-24px;top:89px;width:100px;letter-spacing:0px">Page<br>Setup</div>
<div class="a bt" style="left:19px;top:89px;width:100px;letter-spacing:0px">Print<br>Preview</div>
<div class="a bt" style="left:62px;top:89px;width:100px;letter-spacing:0px">Print</div>
<div class="a bt" style="left:116px;top:89px;width:100px;letter-spacing:0px">Send to<br>Word</div>
<div class="a bt" style="left:162px;top:89px;width:100px;letter-spacing:0px">Send to<br>Excel</div>
<div class="a bt" style="left:217px;top:89px;width:100px;letter-spacing:-0.15px">Copy to the<br>Clipboard</div>
<div class="a bt" style="left:288px;top:89px;width:100px;letter-spacing:-0.45px">Send to ELPLA<br>-Section</div>
<div class="a bt" style="left:994px;top:89px;width:100px;letter-spacing:0px">Redraw</div>
<div class="a bt" style="left:1048px;top:89px;width:100px;letter-spacing:0px">Close</div>
<svg class="a" style="left:1094px;top:106px;" width="8" height="5" viewBox="0 0 8 5"><path d="M0 0h8l-4 4z" fill="#3a4a66"/></svg>
<svg class="a" style="left:11px;top:52px;" width="32" height="32" viewBox="0 0 32 32"><rect x="16" y="4" width="12" height="10" fill="#fafafa" stroke="#999" transform="skewX(-8)"/><path d="M3 16 l4 -4 h22 l-3 4z" fill="#4a4a4a"/><rect x="3" y="16" width="25" height="8" rx="1" fill="#6a6a6a"/><rect x="4" y="17" width="23" height="3" fill="#2a2a2a"/><rect x="5" y="21" width="8" height="3" fill="#6ab4e8"/><rect x="3" y="24" width="25" height="3" fill="#d8d8d8"/><rect x="4.5" y="1.5" width="11" height="13" fill="#fff" stroke="#8a96a6"/><path d="M7 8l2.5 3 4.5-6" stroke="#2a8ad8" stroke-width="1.8" fill="none"/></svg>
<svg class="a" style="left:55px;top:52px;" width="32" height="32" viewBox="0 0 32 32"><path d="M2.5 1.5h14l5 5v19h-19z" fill="#fafcff" stroke="#6a80a0"/><circle cx="17" cy="14" r="6" fill="#cfe4f8" stroke="#6a6a6a" stroke-width="1.5"/><path d="M21 18.5l6 6.5" stroke="#777" stroke-width="2.5"/></svg>
<svg class="a" style="left:96px;top:54px;" width="32" height="30" viewBox="0 0 32 30"><rect x="9" y="2" width="16" height="12" fill="#fafafa" stroke="#999" transform="skewX(-8)"/><path d="M3 16 l4 -4 h22 l-3 4z" fill="#4a4a4a"/><rect x="3" y="16" width="25" height="8" rx="1" fill="#6a6a6a"/><rect x="4" y="17" width="23" height="3" fill="#2a2a2a"/><rect x="5" y="21" width="8" height="3" fill="#6ab4e8"/><rect x="3" y="24" width="25" height="3" fill="#d8d8d8"/></svg>
<svg class="a" style="left:150px;top:52px;" width="32" height="32" viewBox="0 0 32 32"><defs><linearGradient id="wg" x1="0" y1="0" x2="0" y2="1"><stop offset="0" stop-color="#ffffff"/><stop offset="1" stop-color="#b8d0f0"/></linearGradient></defs><rect x="1" y="1" width="29" height="29" rx="2" fill="url(#wg)" stroke="#2a56a8" stroke-width="1.6"/><text x="2.5" y="22" font-size="21" font-weight="bold" font-style="italic" font-family="Liberation Sans" fill="#1a4fb8" letter-spacing="-1">W</text><path d="M16 19l14 3v8H14z" fill="#fff" stroke="#9ab" stroke-width="0.6"/><path d="M17 23h11M17 26h11" stroke="#a8c0e0"/></svg>
<svg class="a" style="left:195px;top:52px;" width="32" height="32" viewBox="0 0 32 32"><defs><linearGradient id="xg" x1="0" y1="0" x2="0" y2="1"><stop offset="0" stop-color="#ffffff"/><stop offset="1" stop-color="#b8e0b8"/></linearGradient></defs><rect x="1" y="1" width="29" height="29" rx="2" fill="url(#xg)" stroke="#2a8a3a" stroke-width="1.6"/><text x="5" y="22" font-size="20" font-weight="bold" font-family="Liberation Sans" fill="#1f7a2a">X</text><path d="M16 19l14 3v8H14z" fill="#fff" stroke="#9b9" stroke-width="0.6"/><path d="M17 23h11M17 26h11" stroke="#a8d0a8"/></svg>
<svg class="a" style="left:252px;top:52px;" width="32" height="34" viewBox="0 0 32 34"><path d="M3.5 1.5h12l4 4v19h-16z" fill="#f8f8f8" stroke="#b0b0b0"/><path d="M9.5 7.5h12l5 5v19h-17z" fill="#fff" stroke="#a8a8a8"/><path d="M12 15h11M12 18h11M12 21h11M12 24h11M12 27h11" stroke="#8aa8d0"/></svg>
<svg class="a" style="left:322px;top:53px;" width="32" height="32" viewBox="0 0 32 32"><rect x="1" y="1" width="30" height="30" fill="#fff" stroke="#1a3a9a" stroke-width="1.6"/><path d="M4 6 q3 14 8 18 q6 3 14-4 l3 -15 v16 H4z" fill="#3aa0e8"/><path d="M4 6 q3 14 8 18 q6 3 14-4 l3 -15" fill="none" stroke="#a01890" stroke-width="1.4"/></svg>
<svg class="a" style="left:1030px;top:52px;" width="30" height="34" viewBox="0 0 30 34"><path d="M6 14 q2-9 13-8 l0-4 8 7 -8 7 0-4 q-6 -1 -9 3z" fill="#2a8ee0"/><path d="M24 19 q-2 9 -13 8 l0 4 -8 -7 8 -7 0 4 q6 1 9 -3z" fill="#2a8ee0"/><path d="M8 11 q3-4 11-4" stroke="#9ad4f8" fill="none"/></svg>
<svg class="a" style="left:1086px;top:57px;" width="26" height="28" viewBox="0 0 26 28"><rect x="1.5" y="1.5" width="20" height="19" fill="#fff" stroke="#4a5a6a"/><rect x="1" y="1" width="21" height="3" fill="#3a70b8"/><rect x="10" y="9" width="14" height="14" rx="2" fill="#e05a30"/><path d="M14 13l6 6M20 13l-6 6" stroke="#fff" stroke-width="2"/></svg>
<svg class="a" style="left:391px;top:53px;" width="17" height="17" viewBox="0 0 17 17"><path d="M3.5 1.5h8l3 3v11h-11z" fill="#fff" stroke="#2a7a3a"/><path d="M5 5v8h7z" fill="none" stroke="#1a2a8a" stroke-width="1.2"/></svg><div class="a t" style="left:410px;top:54px;font-size:11.5px;color:#172642;">Scale</div>
<svg class="a" style="left:391px;top:75px;" width="17" height="17" viewBox="0 0 17 17"><path d="M2.5 4.5h9v11h-9z" fill="#f0e4f0" stroke="#9a6a9a"/><circle cx="9" cy="7" r="4.5" fill="#e8f4fc" stroke="#555"/><path d="M7 6h4M7 8h4" stroke="#2a8a9a"/><path d="M12 10l4 4" stroke="#d8a820" stroke-width="2.5"/></svg><div class="a t" style="left:410px;top:76px;font-size:11.5px;color:#172642;">Set Range</div>
<svg class="a" style="left:391px;top:97px;" width="17" height="17" viewBox="0 0 17 17"><path d="M3 1v14h14" fill="none" stroke="#1a3a8a" stroke-width="1.5"/><path d="M1 4l2-3 2 3M14 13l3 2-3 2" fill="#1a3a8a"/><path d="M1 6h2M1 9h2M1 12h2M6 15v2M9 15v2M12 15v2" stroke="#1a3a8a"/></svg><div class="a t" style="left:410px;top:98px;font-size:11.5px;color:#172642;">Axes</div>
<svg class="a" style="left:470px;top:53px;" width="17" height="17" viewBox="0 0 17 17"><rect x="3.5" y="1.5" width="11" height="14" fill="#fff" stroke="#2a8a4a"/><path d="M5.5 5h7M5.5 8h7M5.5 11h7" stroke="#4a7ad0"/><rect x="3" y="1" width="2" height="15" fill="#c8a8d8"/></svg><div class="a t" style="left:488px;top:54px;font-size:11.5px;color:#172642;">Title</div>
<svg class="a" style="left:470px;top:75px;" width="17" height="17" viewBox="0 0 17 17"><path d="M3.5 1.5h8l3 3v11h-11z" fill="#fff" stroke="#2a8a4a"/><text x="5" y="13" font-size="11" font-weight="bold" font-family="Liberation Sans" fill="#1a2a8a">#</text></svg><div class="a t" style="left:488px;top:76px;font-size:11.5px;color:#172642;">Page No.</div>
<svg class="a" style="left:469px;top:97px;" width="17" height="17" viewBox="0 0 17 17"><rect x="4" y="2" width="11" height="11" fill="#f0d8f0" stroke="#8a6a8a"/><rect x="3" y="5" width="11" height="8" fill="#fff" stroke="#5a6a9a"/><rect x="5" y="8" width="6" height="4" fill="#d02020"/><path d="M1 16l3-3h13v3z" fill="#505050"/></svg><div class="a t" style="left:488px;top:98px;font-size:11.5px;color:#172642;">View Grouping</div>
<svg class="a" style="left:584px;top:53px;" width="17" height="17" viewBox="0 0 17 17"><circle cx="7" cy="7" r="5.5" fill="#f4f8fc" stroke="#606870" stroke-width="1.2"/><path d="M4.5 7h5M7 4.5v5" stroke="#2a4aa0" stroke-width="1.2"/><path d="M11 11l4.5 4.5" stroke="#505050" stroke-width="2"/></svg><div class="a t" style="left:603px;top:54px;font-size:11.5px;color:#172642;">Zoom In</div>
<svg class="a" style="left:584px;top:75px;" width="17" height="17" viewBox="0 0 17 17"><circle cx="7" cy="7" r="5.5" fill="#f4f8fc" stroke="#606870" stroke-width="1.2"/><path d="M4.5 7h5" stroke="#2a4aa0" stroke-width="1.2"/><path d="M11 11l4.5 4.5" stroke="#505050" stroke-width="2"/></svg><div class="a t" style="left:603px;top:76px;font-size:11.5px;color:#172642;">Zoom Out</div>
<svg class="a" style="left:584px;top:97px;" width="17" height="17" viewBox="0 0 17 17"><circle cx="7" cy="7" r="5.5" fill="#f4f8fc" stroke="#606870" stroke-width="1.2"/><path d="M5 4h3l2 2v4H5z" fill="#fff" stroke="#2a4aa0"/><path d="M11 11l4.5 4.5" stroke="#505050" stroke-width="2"/></svg><div class="a t" style="left:603px;top:98px;font-size:11.5px;color:#172642;">Original Size</div>
<svg class="a" style="left:675px;top:53px;" width="17" height="17" viewBox="0 0 17 17"><circle cx="7" cy="7" r="5.5" fill="#f4f8fc" stroke="#606870" stroke-width="1.2"/><rect x="5" y="5" width="4" height="4" fill="none" stroke="#2a6ad0"/><path d="M11 11l4.5 4.5" stroke="#505050" stroke-width="2"/></svg><div class="a t" style="left:694px;top:54px;font-size:11.5px;color:#172642;">Zoom Window</div>
<svg class="a" style="left:675px;top:75px;" width="17" height="17" viewBox="0 0 17 17"><path d="M1 1l5 5M16 1l-5 5M1 16l5-5M16 16l-5-5M1 1h4M1 1v4M16 1h-4M16 1v4M1 16h4M1 16v-4M16 16h-4M16 16v-4" stroke="#111" stroke-width="1.3" fill="none"/></svg><div class="a t" style="left:694px;top:76px;font-size:11.5px;color:#172642;">Move</div>
<svg class="a" style="left:675px;top:97px;" width="17" height="17" viewBox="0 0 17 17"><ellipse cx="8.5" cy="8.5" rx="4" ry="7" fill="none" stroke="#1a2a9a" stroke-width="1.5"/><path d="M1 9h15" stroke="#8a96a6" stroke-width="2"/><path d="M6 2l3 0-1 3z" fill="#1a2a9a"/></svg><div class="a t" style="left:694px;top:98px;font-size:11.5px;color:#172642;">Viewing Angle</div>
<svg class="a" style="left:777px;top:53px;" width="17" height="17" viewBox="0 0 17 17"><path d="M2 15L15 2M10 2h5v5" stroke="#111" stroke-width="1.3" fill="none"/><rect x="1" y="13" width="3" height="3" fill="#111"/></svg><div class="a t" style="left:796px;top:54px;font-size:11.5px;color:#172642;">Zoom Upper Right</div>
<svg class="a" style="left:777px;top:75px;" width="17" height="17" viewBox="0 0 17 17"><path d="M2 2l13 13M2 7V2h5" stroke="#111" stroke-width="1.3" fill="none"/><rect x="13" y="13" width="3" height="3" fill="#111"/></svg><div class="a t" style="left:796px;top:76px;font-size:11.5px;color:#172642;">Zoom Upper Left</div>
<svg class="a" style="left:777px;top:97px;" width="17" height="17" viewBox="0 0 17 17"><path d="M2 2l13 13M10 15h5v-5" stroke="#111" stroke-width="1.3" fill="none"/><rect x="1" y="1" width="3" height="3" fill="#111"/></svg><div class="a t" style="left:796px;top:98px;font-size:11.5px;color:#172642;">Zoom Lower Right</div>
<svg class="a" style="left:898px;top:53px;" width="17" height="17" viewBox="0 0 17 17"><path d="M15 2L2 15M2 10v5h5" stroke="#111" stroke-width="1.3" fill="none"/><rect x="13" y="1" width="3" height="3" fill="#111"/></svg><div class="a t" style="left:917px;top:54px;font-size:11.5px;color:#172642;">Zoom Lower Left</div>
<div class="a t" style="left:917px;top:76px;font-size:11.5px;color:#172642;">Zoom %</div>
<div class="a" style="left:962px;top:73px;width:49px;height:21px;background:#f6f8fc;border:1px solid #b8c8da"></div>
<div class="a t" style="left:966px;top:76px;font-size:11.5px;color:#111;">123</div>
<svg class="a" style="left:1000px;top:81px;" width="7" height="4" viewBox="0 0 7 4"><path d="M0 0h6l-3 3z" fill="#333"/></svg>
<div class="a" style="left:0;top:138px;width:1280px;height:1px;background:#fff"></div>
<div class="a" style="left:0;top:139px;width:1280px;height:1px;background:#a0a0a0"></div>
<div class="a" style="left:0;top:139px;width:3px;height:822px;background:#a9a9a9;z-index:5"></div>
<div class="a" style="left:0;top:140px;width:1280px;height:31px;background:linear-gradient(#efefef,#f8f8f8)"></div>
<div class="a" style="left:0;top:171px;width:1280px;height:1px;background:#a8a8a8"></div>
<div class="a" style="left:6px;top:144px;width:140px;height:28px;background:#fafafa;border:1px solid #a8a8a8;border-bottom:none;border-radius:3px 3px 0 0"></div>
<svg class="a" style="left:11px;top:150px;" width="17" height="17" viewBox="0 0 17 17"><defs><linearGradient id="rb" x1="0" y1="0" x2="1" y2="1"><stop offset="0.25" stop-color="#f00"/><stop offset="0.25" stop-color="#ff0"/><stop offset="0.42" stop-color="#ff0"/><stop offset="0.42" stop-color="#0e0"/><stop offset="0.58" stop-color="#0e0"/><stop offset="0.58" stop-color="#0ff"/><stop offset="0.75" stop-color="#0ff"/><stop offset="0.75" stop-color="#00f"/></linearGradient></defs><rect x="0.5" y="0.5" width="16" height="16" fill="url(#rb)" stroke="#0000a0"/></svg>
<div class="a t" style="left:31px;top:152px;font-size:11.8px;color:#000;font-weight:bold;letter-spacing:0.25px">Settlements (4)</div>
<svg class="a" style="left:126px;top:153px;" width="11" height="10" viewBox="0 0 11 10"><path d="M1 1l9 8M10 1l-9 8" stroke="#7a7a7a" stroke-width="2.2"/></svg>
<svg class="a" style="left:1259px;top:150px;" width="14" height="12" viewBox="0 0 14 12"><rect x="1" y="1" width="12" height="2.5" fill="#000"/><path d="M1 5h12l-6 6z" fill="#000"/></svg>

<div class="a" style="left:1264px;top:172px;width:16px;height:775px;background:linear-gradient(90deg,#e4e4e4,#f0f0f0 30%,#f0f0f0)"></div>
<svg class="a" style="left:1264px;top:176px;" width="16" height="10" viewBox="0 0 16 10"><path d="M4 7h8l-4-4z" fill="#404040"/></svg>
<svg class="a" style="left:1264px;top:932px;" width="16" height="10" viewBox="0 0 16 10"><path d="M4 3h8l-4 4z" fill="#404040"/></svg>
<div class="a" style="left:1264px;top:526px;width:15px;height:16px;border:1px solid #8a8a8a;border-radius:2px;background:linear-gradient(90deg,#f4f4f4,#e4e4e4 55%,#cfcfcf 60%,#d8d8d8)"></div>
<div class="a" style="left:3px;top:946px;width:1277px;height:15px;background:linear-gradient(#dedede,#ececec 20%,#ececec 90%,#e0e0e0)"></div>
<svg class="a" style="left:5px;top:947px;" width="12" height="14" viewBox="0 0 12 14"><path d="M8 3v8l-4-4z" fill="#404040"/></svg>
<svg class="a" style="left:1265px;top:947px;" width="12" height="14" viewBox="0 0 12 14"><path d="M4 3v8l4-4z" fill="#404040"/></svg>
<div class="a" style="left:665px;top:947px;width:15px;height:14px;border:1px solid #8a8a8a;border-radius:2px;background:linear-gradient(#f4f4f4,#e8e8e8 45%,#cfcfcf 50%,#d4d4d4)"></div>
<div class="a" style="left:0;top:961px;width:1280px;height:23px;background:#f0f0f0"></div>
<div class="a t" style="left:4px;top:966px;font-size:11.5px;color:#111;">x [m] = 2.24</div>
<div class="a t" style="left:84px;top:966px;font-size:11.5px;color:#111;">y [m] = &nbsp;-2.17</div>
</body></html>
